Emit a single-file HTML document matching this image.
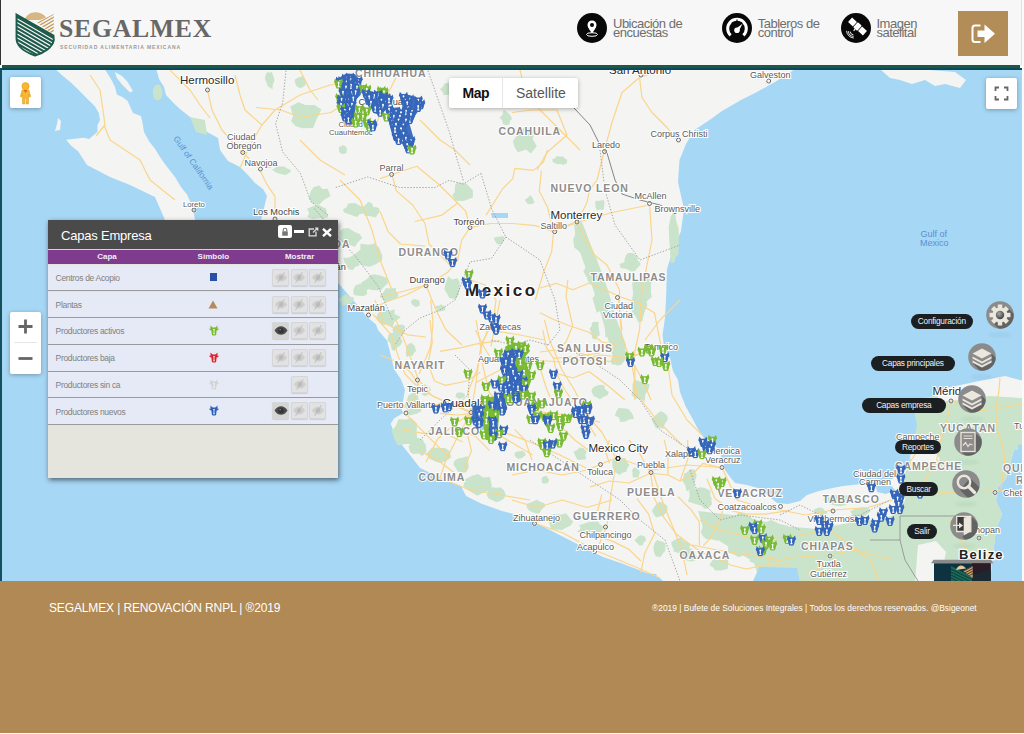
<!DOCTYPE html>
<html><head><meta charset="utf-8">
<style>
html,body{margin:0;padding:0;width:1024px;height:734px;overflow:hidden;background:#fbfbfb;font-family:"Liberation Sans",sans-serif;}
.abs{position:absolute;}
#hdr{position:absolute;left:0;top:0;width:1020px;height:65px;background:#f7f7f7;border-left:1px solid #333;border-right:1px solid #e2e2e2;}
#gline{position:absolute;left:2px;top:65px;width:1018px;height:3px;background:#1f5946;}
#tline{position:absolute;left:0;top:68px;width:1022px;height:2px;background:#0b4a5a;}
#lborder{position:absolute;left:0;top:68px;width:2px;height:513px;background:#134f5e;}
#map{position:absolute;left:2px;top:70px;width:1020px;height:511px;overflow:hidden;}
#footer{position:absolute;left:0;top:581px;width:1024px;height:152px;background:#b08954;}
#footer .l{position:absolute;left:49px;top:20px;color:#fff;font-size:12px;letter-spacing:-0.13px;}
#footer .r{position:absolute;left:652px;top:21.5px;color:#fff;font-size:8.44px;letter-spacing:0px;}
.navt{font-size:13px;letter-spacing:-0.5px;line-height:8.6px;color:#6e6e6e;}
.ctl{background:#fff;border-radius:2px;box-shadow:0 1px 4px rgba(0,0,0,0.3);}
.ph{top:31px;width:60px;text-align:center;font-size:8px;font-weight:bold;color:#f4eef6;line-height:12px;}
.prow{position:absolute;left:0;width:290px;height:25.7px;background:#e6eaf6;border-bottom:1px solid #9a9a9a;}
.pname{position:absolute;left:7.6px;top:8.3px;font-size:8.5px;letter-spacing:-0.32px;color:#808080;line-height:10px}
.eb{position:absolute;top:4px;width:17px;height:17px;background:#e2e2e2;border-radius:2px;box-shadow:inset 0 0 0 1px #d6d6d6, 0 1px 1px rgba(0,0,0,0.12);}
.eb svg{position:absolute;left:-0.5px;top:0}
.prow svg,.prow div svg{display:block}
.eb.on{background:#d5d5d5}
.pill{position:absolute;background:#1b1f22;border-radius:8px;color:#f0f0f0;font-size:8.3px;letter-spacing:-0.25px;text-align:center;}
/*MAPCSS*/text.st{font-family:"Liberation Sans",sans-serif;font-weight:bold;font-size:10.5px;letter-spacing:0.87px;fill:#8c8c8c;stroke:#fff;stroke-width:2px;paint-order:stroke;}
text.c1{font-family:"Liberation Sans",sans-serif;font-size:11.5px;fill:#2a2a2a;stroke:#fff;stroke-width:2px;paint-order:stroke;}
text.c2{font-family:"Liberation Sans",sans-serif;font-size:9.2px;fill:#444;stroke:#fff;stroke-width:2px;paint-order:stroke;}
text.c4{font-family:"Liberation Sans",sans-serif;font-size:7.7px;fill:#5a5a5a;stroke:#fff;stroke-width:2px;paint-order:stroke;}
text.c3{font-family:"Liberation Sans",sans-serif;font-size:9px;fill:#5a5a5a;stroke:#fff;stroke-width:2px;paint-order:stroke;}
text.wl{font-family:"Liberation Sans",sans-serif;font-size:9px;fill:#5b8fd3;}
text.mx{font-family:"Liberation Sans",sans-serif;font-weight:bold;font-size:17px;letter-spacing:2.5px;fill:#222;stroke:#fff;stroke-width:2.5px;paint-order:stroke;}
/*ENDMAPCSS*/</style></head><body>
<div id="hdr">
<svg class="abs" style="left:14px;top:11px" width="40" height="46" viewBox="14 11 40 46">
<defs><clipPath id="sh"><path d="M15.5,14.5 L52.5,35.5 L52.8,40 C52,47 43,53 34,55.5 C24,52 16,47 15.5,39 Z"/></clipPath>
<clipPath id="gt"><path d="M36,22.5 L52.8,14 L52.8,35 Z"/></clipPath></defs>
<path d="M23.5,20 C25,15 30,12.3 34,12.3 C38,12.3 43,14 45,17.5 L39,20 Z" fill="#d6b783"/>
<g clip-path="url(#gt)" stroke="#c49a5c" stroke-width="1.3"><path d="M30,27 L56,12 M30,30.3 L56,15.3 M30,33.6 L56,18.6 M30,36.9 L56,21.9 M30,40.2 L56,25.2 M30,43.5 L56,28.5"/></g>
<g clip-path="url(#sh)"><rect x="14" y="11" width="40" height="46" fill="#1e5b4b"/>
<g stroke="#f7f7f7" stroke-width="1.2"><path d="M16,18.7 L54,40.7 M16,22.5 L54,44.5 M16,26.3 L54,48.3 M16,30.1 L54,52.1 M16,33.9 L54,55.9 M16,37.7 L54,59.7 M16,41.5 L54,63.5 M16,45.3 L54,67.3"/></g>
</g>
<path d="M15.5,14.5 L52.5,35.5 L52.8,40 C52,47 43,53 34,55.5 C24,52 16,47 15.5,39 Z" fill="none" stroke="#1e5b4b" stroke-width="1.9"/>
</svg>
<div class="abs" style="left:58px;top:14px;font-family:'Liberation Serif',serif;font-weight:bold;font-size:25.7px;letter-spacing:0.75px;color:#676767;line-height:30px">SEGALMEX</div>
<div class="abs" style="left:59px;top:43.5px;font-weight:bold;font-size:5px;letter-spacing:0.94px;color:#9a9a9a;line-height:7px">SECURIDAD ALIMENTARIA MEXICANA</div>
<div class="abs nav" style="left:576px;top:13px"><svg width="30" height="30" viewBox="0 0 30 30"><circle cx="15" cy="15" r="15" fill="#080808"/><path d="M15,7.5 C12.2,7.5 10.5,9.6 10.5,12 C10.5,14.6 13,17.5 15,20.5 C17,17.5 19.5,14.6 19.5,12 C19.5,9.6 17.8,7.5 15,7.5 Z" fill="#fff"/><circle cx="15" cy="12" r="2" fill="#080808"/><ellipse cx="15" cy="21.5" rx="5.5" ry="1.8" fill="none" stroke="#fff" stroke-width="1"/></svg></div>
<div class="abs navt" style="left:612px;top:20.3px">Ubicación de<br>encuestas</div>
<div class="abs nav" style="left:721px;top:13px"><svg width="30" height="30" viewBox="0 0 30 30"><circle cx="15" cy="15" r="15" fill="#080808"/><path d="M8.6,22.4 A9.3,9.3 0 1 1 21.4,22.4" fill="none" stroke="#fff" stroke-width="3"/><path d="M10,9.2 l1.2,1.2 M15,6.6 v1.8 M20,9.2 l-1.2,1.2" stroke="#080808" stroke-width="1.1"/><path d="M13.2,16.2 L20.5,10.8 L16.6,18.2 Z" fill="#fff"/><circle cx="15" cy="17.2" r="2.8" fill="#fff"/></svg></div>
<div class="abs navt" style="left:756.7px;top:20.3px">Tableros de<br>control</div>
<div class="abs nav" style="left:839.5px;top:13px"><svg width="30" height="30" viewBox="0 0 30 30"><circle cx="15" cy="15" r="15" fill="#080808"/><g transform="rotate(42 16.5 13.5)"><rect x="6.5" y="10.5" width="6.5" height="6" fill="#fff"/><rect x="20" y="10.5" width="6.5" height="6" fill="#fff"/><rect x="13.8" y="10" width="5.4" height="7" rx="1" fill="#fff"/><path d="M16.5,17 v2.2" stroke="#fff" stroke-width="1.2"/></g><path d="M9.2,18.6 a3.5,3.5 0 0 0 3.2,3.2 M7.4,18.2 a5.6,5.6 0 0 0 5.2,5.2 M5.6,17.8 a7.6,7.6 0 0 0 7.2,7.2" fill="none" stroke="#fff" stroke-width="0.9"/></svg></div>
<div class="abs navt" style="left:875.5px;top:20.3px">Imagen<br>satelital</div>
<div class="abs" style="left:957px;top:11px;width:50px;height:45px;background:#b38d57"><svg width="50" height="45" viewBox="0 0 50 45"><path d="M22.5,14.5 H17 C15.2,14.5 14.5,15.5 14.5,17 V28.5 C14.5,30 15.2,31 17,31 H22.5" fill="none" stroke="#fff" stroke-width="2"/><path d="M19.5,19.5 H26.5 V13.5 L37,22.8 L26.5,32 V26 H19.5 Z" fill="#fff"/></svg></div>
</div>
<div id="gline"></div>
<div id="tline"></div>
<div id="lborder"></div>
<div id="map">
<svg width="1020" height="511" viewBox="2 70 1020 511">
<defs>
<symbol id="cw" viewBox="0 0 10 11"><path d="M1.2,0.2 L2.9,2.2 Q5,2.7 7.1,2.2 L8.8,0.2 L9.3,2.6 L10,3.8 L8.8,5.6 L8,9 L6.9,10.9 H3.1 L2,9 L1.2,5.6 L0,3.8 L0.7,2.6 Z"/><circle cx="5" cy="4.8" r="1" fill="#fff"/><path d="M4.45,4.8 H5.55 V8.4 H6.2 V9.5 H3.8 V8.4 H4.45 Z" fill="#fff"/></symbol>
</defs>
<rect x="0" y="60" width="1030" height="530" fill="#a6d7f5"/>
<path fill="#f4f4f3" d="M157,68 L797,68 L775,82 L755,93 L741,100 L722,111 L711,119 L694.5,130 L686,144 L679.5,160 L678,182 L684,209 L681,231 L673,250 L667,269 L666,300 L665,318 L662.5,335 L664,346 L670,358 L673,371 L678,380 L680,392 L685.5,406 L692.6,419 L698,429 L704,438 L710,440 L719,450 L723,461 L725,470 L730,477 L735,483 L747,485 L758,488 L766,494 L772,499 L777,503 L788,504 L800,501 L807,495 L818,491.3 L835,487.5 L843,486 L863.5,483.7 L884,481 L892,479 L900.5,473.6 L907,465.5 L913,454.5 L917,441 L919,427 L919.5,413.6 L925,406 L932,398 L940,393 L946,388 L963,384.5 L979,381 L995,378 L1005,376 L1024,381 L1024,450 L1014,450 L1006,479 L998,487 L996,501 L1002,514 L996,530 L994,546 L992,563 L990,583 L665,583 L660,578 L644,572 L623.5,564 L603,557 L583,547 L562.5,536.5 L542,526 L522,516 L502,511 L481,503.5 L466,496 L461,486 L441,478 L420,468 L410,455 L400,442.5 L399.6,443 L394,432.7 L390.7,423.8 L394,418.5 L403,413 L401,408 L403,401 L405,390 L401,379.6 L394,369 L390.7,354.8 L387,340.6 L378,330 L376,324.5 L366,316 L360,308 L352,299 L340,285 L300,250 L261,220 L263,212 L265,204 L267,196 L263,189 L255,183 L248,175 L240,167 L228,161 L220,150 L218,138 L207,132 L200,125 L180,109 L174,103.5 L166,95 L164,87 L159,79 L156,68 Z"/>
<path fill="#f4f4f3" d="M54,68 L63,76 L71.4,83 L79.6,91 L87.9,99.4 L94.7,106 L98.8,113 L100,120 L97.4,125.4 L97.4,132 L92,136.4 L89.2,139 L83.8,137.7 L66,139.8 L71.4,146 L78.3,151.4 L83.8,160 L87,165 L110,177 L130,185 L155,197 L165,220 L175,260 L200,300 L230,330 L260,330 L240,290 L195,220 L193,208 L187,194.5 L181,187 L175,177 L165.6,165 L160,157 L155,148.7 L149.4,141.8 L144,132 L142.5,122.7 L141,116 L133,113 L127.5,100.8 L122,96.7 L117,94.7 L115,87 L111,79 L104,68 Z"/>
<path fill="#f4f4f3" d="M115,72 L122,76 L127.5,81.7 L133,91 L130,92.6 L122,84.4 L116.6,77.6 Z"/>
<ellipse cx="157.6" cy="92.6" rx="4.8" ry="8" fill="#c9e4ca"/>
<path fill="#f4f4f3" d="M58,118 L61,121 L60,130 L55,131 L57,124 Z"/>
<path fill="#f4f4f3" d="M881,70 L900,70 L930,70 L955,72 L966,80 L960,88 L945,84 L935,86 L925,80 L912,84 L900,80 L890,78 Z"/>
<path fill="#c9e4ca" d="M190,117 L205,120 L207,135 L196,132 Z"/>
<g fill="#c9e4ca"><path d="M912,400 L935,396 L960,398 L985,392 L1024,392 L1024,450 L1014,450 L1006,479 L998,487 L996,501 L1002,514 L996,530 L994,546 L992,563 L990,583 L870,583 L872,560 L890,540 L898,520 L905,500 L902,482 L908,465 L913,445 L917,425 Z"/><path d="M574,224 L582,222 L592,248 L600,268 L608,290 L616,318 L626,345 L624,362 L614,360 L606,332 L598,304 L590,280 L582,258 L576,240 Z"/><path d="M866,528 L880,520 L902,512 L908,540 L900,583 L862,583 L860,550 Z"/><path d="M698,511 L741,516 L782,526 L818,529 L843,524 L872,520 L880,545 L870,583 L760,583 L754,562 L729,547 L704,531 Z"/><path d="M367.5,209.5 L366.4,213.0 L359.4,214.2 L357.1,217.1 L350.4,214.8 L343.8,212.2 L343.0,209.4 L346.5,207.3 L348.2,203.5 L355.1,203.1 L360.2,206.0 L366.6,207.2 Z"/><path d="M379.6,212.1 L377.7,214.3 L375.8,217.6 L371.7,216.3 L368.4,216.1 L364.0,215.6 L366.0,211.4 L365.3,208.7 L368.3,208.0 L372.4,206.9 L376.7,207.2 L379.2,208.5 Z"/><path d="M362.2,238.1 L357.4,242.8 L355.0,246.7 L349.6,245.0 L346.3,245.6 L341.7,241.3 L340.5,238.0 L339.6,231.7 L343.1,228.6 L348.4,227.9 L355.1,232.2 L359.7,234.0 Z"/><path d="M382.4,255.8 L382.0,260.5 L375.7,264.3 L369.7,266.8 L362.5,265.6 L355.5,260.3 L353.4,255.2 L360.3,249.8 L360.5,243.7 L368.9,244.8 L374.8,243.4 L379.1,247.8 Z"/><path d="M358.2,261.2 L359.6,265.6 L355.7,266.5 L352.7,269.9 L348.4,269.2 L346.3,264.6 L344.3,261.9 L343.3,257.8 L348.4,257.8 L353.0,255.4 L355.0,256.2 L360.2,257.4 Z"/><path d="M387.8,283.4 L383.9,286.8 L381.1,290.3 L375.7,290.3 L371.1,289.8 L364.5,288.3 L360.8,283.1 L367.0,279.1 L370.2,275.2 L374.7,274.2 L380.2,275.4 L387.7,278.3 Z"/><path d="M398.7,294.5 L397.4,297.5 L394.0,299.2 L390.5,300.6 L385.6,302.0 L382.7,299.6 L380.0,295.9 L383.8,291.7 L386.0,287.9 L388.9,288.4 L395.9,287.9 L396.2,291.4 Z"/><path d="M366.7,290.8 L367.2,293.9 L363.2,296.2 L359.1,295.7 L354.8,295.2 L353.4,293.7 L353.4,289.8 L354.2,287.5 L355.6,285.4 L359.4,283.8 L364.8,284.5 L369.6,286.6 Z"/><path d="M400.8,317.1 L394.3,322.0 L392.7,326.9 L387.6,324.5 L382.3,324.7 L378.3,321.7 L376.3,317.2 L377.8,313.6 L383.3,308.2 L389.0,311.1 L394.6,309.3 L394.7,314.3 Z"/><path d="M404.7,329.3 L404.1,332.2 L402.7,335.1 L397.9,335.9 L393.8,334.2 L393.1,332.2 L392.6,329.7 L392.9,328.0 L395.0,325.4 L398.0,324.7 L403.1,324.7 L405.1,326.7 Z"/><path d="M459.9,288.2 L458.6,294.8 L455.7,298.9 L452.0,298.6 L449.3,298.1 L446.6,292.7 L444.4,289.5 L445.5,283.4 L448.1,276.3 L452.1,279.4 L457.5,278.2 L459.8,282.3 Z"/><path d="M472.8,190.3 L472.9,197.6 L468.2,199.3 L463.4,200.9 L455.9,200.8 L452.1,195.5 L454.7,192.1 L455.1,184.9 L457.0,182.7 L464.1,182.8 L466.7,183.9 L470.6,188.0 Z"/><path d="M419.7,302.6 L419.6,305.6 L418.2,306.3 L415.9,307.0 L414.0,305.9 L412.7,305.1 L410.9,302.6 L411.5,300.4 L413.1,299.2 L415.7,299.3 L417.8,300.1 L419.1,300.6 Z"/><path d="M445.2,308.0 L445.5,309.5 L444.3,310.7 L440.3,311.3 L437.2,311.5 L437.9,309.6 L434.5,308.1 L435.7,306.0 L439.2,305.6 L440.9,304.2 L442.7,305.4 L445.2,306.6 Z"/><path d="M326.8,212.1 L328.1,217.2 L323.8,218.5 L318.8,218.0 L312.9,218.9 L307.3,217.0 L309.2,212.8 L307.0,208.9 L312.5,206.2 L317.4,204.5 L322.2,206.8 L326.1,208.7 Z"/><path d="M354.1,299.3 L351.3,302.9 L349.3,303.7 L346.7,304.4 L342.5,305.6 L341.2,302.6 L337.6,299.2 L340.2,298.1 L343.6,295.4 L346.3,294.2 L348.9,296.6 L353.3,297.3 Z"/><path d="M318.2,116.2 L316.6,118.9 L313.1,128.1 L302.5,128.2 L295.7,126.3 L291.1,121.3 L293.0,116.0 L290.3,106.6 L298.4,102.2 L305.3,104.9 L314.5,105.0 L321.5,109.4 Z"/><path d="M305.5,82.0 L305.7,84.9 L302.6,87.3 L300.1,88.2 L296.9,86.6 L295.9,85.1 L294.6,81.2 L295.1,79.4 L297.2,78.1 L300.4,76.8 L303.1,76.2 L304.4,79.5 Z"/><path d="M291.0,170.1 L290.4,172.3 L285.3,175.0 L280.7,174.0 L276.9,172.9 L274.8,171.7 L272.0,169.6 L275.2,168.0 L276.6,165.5 L280.2,166.5 L284.0,166.5 L287.2,168.5 Z"/><path d="M455.1,90.1 L455.0,93.4 L451.0,94.3 L447.8,94.7 L443.2,95.3 L443.3,93.2 L440.0,89.0 L442.4,86.9 L444.7,83.6 L447.0,83.1 L451.5,83.7 L454.3,85.7 Z"/><path d="M512.2,119.0 L510.2,120.3 L509.3,124.5 L506.0,125.3 L502.9,124.0 L502.2,120.3 L499.5,117.7 L502.4,115.0 L503.4,110.0 L505.7,111.1 L508.0,113.1 L510.2,115.0 Z"/><path d="M330.6,196.0 L326.6,198.3 L322.4,201.2 L319.4,204.8 L312.6,203.8 L308.6,198.3 L309.9,194.5 L311.0,190.9 L313.7,187.1 L319.5,185.5 L322.2,188.9 L327.6,188.8 Z"/><path d="M373.5,210.2 L373.5,212.4 L372.5,216.7 L369.6,216.0 L367.3,215.1 L363.4,213.7 L364.1,210.2 L363.9,206.6 L365.9,204.5 L368.4,201.8 L372.2,203.4 L373.0,206.5 Z"/><path d="M346.9,149.4 L346.4,153.1 L344.7,153.7 L343.1,153.9 L340.8,153.6 L339.4,151.9 L338.8,150.6 L339.2,146.4 L341.6,146.2 L342.5,145.1 L345.2,146.2 L346.2,147.0 Z"/><path d="M274.5,80.8 L272.8,84.4 L272.5,89.3 L269.5,87.2 L267.5,86.2 L267.1,84.1 L264.8,78.7 L266.0,73.7 L268.0,71.6 L269.7,73.1 L271.7,71.7 L273.7,76.9 Z"/><path d="M402.5,341.4 L400.3,345.6 L397.4,347.2 L394.5,350.9 L391.9,349.8 L390.2,343.1 L387.4,340.9 L388.5,334.7 L391.4,332.9 L394.8,333.0 L398.7,331.7 L399.3,335.4 Z"/><path d="M416.0,351.0 L414.3,352.6 L412.5,356.1 L410.1,355.2 L406.7,357.2 L405.8,352.5 L406.1,349.4 L406.2,346.8 L408.1,344.4 L410.2,343.1 L412.3,343.4 L414.6,346.1 Z"/><path d="M420.1,404.6 L421.4,411.3 L417.1,413.5 L412.6,414.8 L407.4,415.7 L407.7,410.1 L404.0,405.2 L407.2,399.2 L408.2,395.4 L413.4,392.6 L417.2,393.1 L419.1,401.5 Z"/><path d="M416.6,431.4 L417.2,438.8 L413.4,444.1 L405.5,444.1 L397.8,445.6 L394.5,439.5 L391.6,430.7 L395.8,426.0 L398.5,419.3 L406.2,419.4 L411.4,418.1 L417.0,423.7 Z"/><path d="M425.8,444.8 L426.5,451.8 L422.3,456.0 L418.7,453.6 L413.2,454.1 L410.0,451.7 L408.5,446.6 L411.4,441.8 L413.0,437.8 L418.1,438.1 L422.9,439.6 L423.8,442.2 Z"/><path d="M450.4,454.3 L450.9,457.8 L445.5,461.2 L440.6,463.0 L435.2,461.5 L429.5,458.8 L425.9,454.2 L429.3,450.5 L432.3,447.5 L440.8,447.9 L445.0,448.0 L449.5,451.1 Z"/><path d="M468.8,465.6 L468.3,468.4 L466.1,472.4 L461.6,472.5 L457.5,471.6 L456.4,468.9 L453.5,464.8 L454.1,460.9 L458.5,458.2 L461.7,458.1 L467.6,456.0 L468.1,461.7 Z"/><path d="M431.1,389.8 L428.4,392.3 L427.5,395.4 L425.2,395.9 L422.5,395.1 L421.4,392.8 L419.2,389.3 L419.4,387.7 L422.2,385.7 L424.5,383.9 L427.4,386.1 L429.1,386.8 Z"/><path d="M465.2,394.8 L464.3,397.5 L462.2,398.0 L459.3,399.3 L457.5,397.5 L455.5,397.1 L455.9,395.2 L456.5,393.2 L458.0,392.4 L459.8,392.4 L461.6,392.5 L464.1,393.4 Z"/><path d="M491.8,485.7 L490.0,490.3 L482.7,493.1 L477.4,495.7 L473.6,493.4 L468.6,490.4 L463.5,486.4 L464.2,479.7 L472.2,475.7 L478.0,474.1 L483.2,477.5 L490.0,477.1 Z"/><path d="M505.7,494.8 L504.0,498.5 L500.3,500.9 L496.5,502.2 L491.2,499.8 L488.6,498.5 L486.6,494.9 L488.8,489.6 L492.4,486.9 L495.4,487.8 L500.9,487.5 L504.1,490.4 Z"/><path d="M545.3,506.1 L541.5,509.7 L539.4,513.0 L537.1,513.7 L531.8,511.9 L528.9,510.3 L526.8,507.6 L526.7,503.7 L532.0,502.1 L537.1,499.8 L539.7,501.4 L544.2,503.3 Z"/><path d="M573.3,521.6 L570.6,525.6 L566.1,527.7 L562.0,530.1 L550.8,529.2 L550.3,526.2 L548.9,521.9 L548.2,516.5 L552.7,514.3 L561.9,514.5 L566.0,513.3 L570.9,519.4 Z"/><path d="M604.5,526.8 L600.7,532.2 L593.8,533.5 L590.8,535.0 L586.1,533.4 L576.8,531.9 L580.9,528.2 L579.0,525.4 L586.3,522.8 L589.2,522.0 L598.2,521.5 L599.5,524.2 Z"/><path d="M585.2,454.8 L586.2,459.2 L583.0,459.5 L579.6,460.0 L577.4,459.5 L576.1,457.5 L574.8,454.7 L573.7,451.5 L576.4,450.5 L579.8,447.5 L583.3,448.1 L586.9,451.6 Z"/><path d="M622.3,468.3 L622.0,470.7 L620.6,474.9 L617.8,473.9 L615.6,472.2 L613.9,469.9 L612.6,467.5 L612.2,464.9 L615.3,462.8 L617.7,462.3 L620.1,462.8 L622.1,466.1 Z"/><path d="M640.0,473.1 L638.8,474.9 L638.6,477.5 L636.4,477.2 L633.4,477.7 L632.4,475.4 L632.7,473.0 L632.0,470.9 L633.2,467.9 L636.1,467.6 L638.2,469.3 L639.2,470.4 Z"/><path d="M525.9,455.0 L523.1,457.1 L522.3,457.9 L520.4,458.6 L517.6,458.8 L515.6,456.8 L514.6,455.2 L514.9,452.5 L518.2,451.2 L520.5,451.2 L522.7,450.8 L524.9,452.7 Z"/><path d="M549.2,479.6 L548.4,482.0 L547.7,483.1 L545.3,483.6 L542.9,483.6 L541.9,481.9 L541.6,479.6 L541.8,478.6 L542.6,476.9 L545.7,475.7 L547.2,476.4 L548.0,478.6 Z"/><path d="M585.3,241.0 L585.5,244.6 L581.9,249.3 L579.9,252.5 L577.6,250.1 L574.2,247.6 L573.2,239.5 L575.4,234.0 L577.4,228.4 L580.2,229.3 L583.3,226.7 L586.7,233.7 Z"/><path d="M597.4,270.6 L597.9,275.6 L595.6,281.7 L592.2,283.5 L588.3,282.2 L586.6,276.7 L583.3,271.5 L587.5,264.4 L589.1,259.9 L591.9,260.9 L596.1,256.9 L597.6,262.6 Z"/><path d="M608.4,300.2 L610.8,305.9 L605.0,309.0 L601.1,310.5 L596.7,312.7 L595.3,307.7 L592.5,298.4 L594.8,295.0 L598.6,291.1 L600.8,287.9 L604.9,290.2 L608.2,294.0 Z"/><path d="M619.1,329.2 L618.6,336.0 L614.7,336.6 L611.6,339.1 L608.9,337.5 L605.4,336.9 L604.9,328.8 L605.1,324.5 L608.7,317.8 L612.1,320.2 L616.6,321.0 L617.6,323.7 Z"/><path d="M640.8,264.2 L637.2,268.2 L634.9,271.0 L631.2,271.4 L626.7,269.1 L620.7,267.9 L619.5,264.1 L623.6,262.6 L626.8,259.8 L628.7,258.0 L635.7,258.7 L639.7,262.3 Z"/><path d="M647.3,305.3 L644.0,313.6 L642.3,321.2 L638.0,321.9 L636.4,317.7 L632.0,311.4 L631.8,306.9 L632.2,298.9 L634.2,287.7 L639.2,287.5 L642.4,289.8 L645.6,295.3 Z"/><path d="M678.9,237.2 L678.6,254.3 L676.2,256.6 L673.9,263.0 L670.8,263.3 L669.9,247.8 L669.3,241.2 L668.7,227.3 L670.8,216.4 L674.7,209.4 L676.2,221.1 L678.6,228.8 Z"/><path d="M624.3,360.8 L622.4,363.3 L621.3,364.7 L617.3,365.4 L614.8,364.4 L611.6,364.8 L610.9,360.1 L612.6,356.2 L613.6,352.4 L617.3,353.5 L621.5,352.4 L624.8,356.7 Z"/><path d="M648.8,388.5 L645.3,394.7 L644.5,402.0 L641.2,399.3 L635.0,398.3 L631.4,394.7 L632.5,391.3 L632.5,385.0 L634.1,379.5 L639.7,381.3 L643.1,382.5 L649.7,384.3 Z"/><path d="M667.8,419.5 L664.7,424.0 L663.2,429.0 L660.0,427.6 L656.1,428.5 L653.5,423.5 L651.4,419.6 L654.4,416.5 L657.1,413.7 L660.7,411.3 L663.3,412.3 L667.2,415.7 Z"/><path d="M608.7,391.9 L607.8,395.1 L603.3,397.0 L599.9,399.3 L596.2,396.9 L593.8,396.3 L591.4,391.2 L592.7,387.9 L595.4,386.2 L600.5,384.7 L604.6,385.4 L604.8,389.1 Z"/><path d="M633.1,415.6 L634.0,418.8 L629.0,419.5 L625.6,421.5 L620.2,422.0 L619.0,417.5 L614.9,415.7 L616.3,411.5 L618.5,408.1 L625.8,408.5 L628.8,409.3 L630.9,411.8 Z"/><path d="M532.9,139.6 L536.8,146.0 L531.0,153.6 L525.9,149.5 L517.9,152.2 L514.7,147.4 L512.9,140.9 L517.0,135.3 L521.0,129.5 L525.9,126.4 L531.7,129.1 L533.5,135.6 Z"/><path d="M637.5,260.5 L637.6,263.6 L635.3,265.8 L632.2,267.7 L628.6,264.7 L625.3,263.2 L624.3,260.1 L625.7,255.7 L627.9,252.9 L632.6,253.1 L634.5,254.3 L637.4,256.3 Z"/><path d="M650.9,291.4 L651.7,296.9 L645.9,302.0 L640.6,306.0 L639.1,300.0 L635.6,296.4 L632.9,291.5 L632.2,282.8 L638.3,279.9 L642.2,275.1 L646.7,275.6 L651.2,280.6 Z"/><path d="M598.9,329.5 L599.9,334.9 L597.1,337.0 L595.3,339.7 L592.3,338.2 L591.4,332.9 L589.5,328.6 L591.7,326.1 L592.0,322.8 L594.6,321.8 L598.7,321.9 L598.4,326.2 Z"/><path d="M567.1,159.8 L567.0,163.0 L563.8,164.8 L560.1,164.0 L556.9,164.2 L553.1,162.2 L551.9,159.4 L555.5,157.9 L556.4,155.9 L560.7,156.5 L563.6,156.7 L565.0,158.7 Z"/><path d="M604.3,204.7 L604.1,206.8 L603.3,210.1 L599.5,209.4 L597.3,210.8 L595.4,206.9 L595.6,204.4 L594.9,201.6 L597.1,200.8 L599.6,200.7 L603.8,200.0 L604.5,202.6 Z"/><path d="M504.2,240.0 L503.7,241.2 L501.9,244.0 L499.6,244.3 L497.3,244.2 L495.8,242.3 L494.3,239.5 L494.4,237.2 L498.2,236.7 L499.4,236.8 L502.8,236.3 L504.2,237.3 Z"/><path d="M533.3,199.8 L534.5,202.6 L532.0,204.2 L530.1,204.0 L528.2,204.2 L526.4,202.5 L524.8,199.7 L526.8,198.6 L528.6,197.0 L530.4,195.1 L531.6,196.8 L532.8,198.2 Z"/><path d="M695.6,478.8 L694.4,484.5 L694.8,489.6 L689.6,489.4 L686.5,491.4 L685.3,485.5 L682.4,480.4 L684.3,473.6 L686.5,472.7 L690.3,469.3 L694.2,469.6 L696.7,475.3 Z"/><path d="M711.1,498.9 L712.1,504.2 L707.8,508.2 L704.3,508.8 L701.3,505.6 L698.5,504.1 L695.6,499.3 L698.0,497.0 L699.2,491.0 L704.1,493.0 L708.3,491.5 L708.3,495.9 Z"/><path d="M716.7,529.4 L714.8,533.5 L714.6,536.7 L709.4,539.8 L706.6,536.3 L701.5,533.8 L702.1,530.6 L702.7,526.0 L707.7,524.4 L711.0,522.7 L713.9,522.4 L716.7,524.8 Z"/><path d="M752.8,521.0 L748.0,524.2 L743.8,525.0 L738.3,528.2 L735.0,527.7 L733.3,523.0 L730.4,520.4 L729.1,516.9 L735.9,515.4 L738.9,511.8 L744.2,514.1 L751.1,516.9 Z"/><path d="M788.7,531.3 L783.6,534.5 L778.2,538.8 L769.8,540.0 L763.4,536.2 L755.0,536.3 L753.1,530.9 L754.5,524.6 L763.4,523.0 L771.2,519.9 L779.0,523.7 L788.1,525.9 Z"/><path d="M815.6,543.8 L817.5,551.2 L808.2,554.6 L801.1,560.0 L793.0,558.0 L787.1,549.6 L786.4,546.1 L784.7,538.9 L791.2,532.3 L800.6,533.0 L807.7,531.9 L810.5,539.3 Z"/><path d="M855.9,551.6 L848.6,556.8 L845.8,560.2 L834.4,561.2 L824.6,561.5 L812.7,555.7 L817.9,549.6 L819.6,542.5 L824.5,539.0 L833.2,539.1 L841.4,541.4 L850.2,542.4 Z"/><path d="M885.0,541.5 L879.1,546.4 L875.0,551.8 L869.0,552.8 L862.7,553.8 L861.2,547.9 L859.0,540.4 L862.4,533.4 L864.3,529.2 L868.9,528.8 L876.8,529.5 L880.6,534.9 Z"/><path d="M751.1,548.0 L748.2,553.3 L745.5,554.7 L738.5,557.3 L734.1,554.5 L728.5,552.8 L727.9,549.1 L729.6,541.5 L734.8,542.1 L741.2,539.7 L745.0,539.5 L748.2,543.6 Z"/><path d="M667.5,509.7 L666.1,512.8 L663.1,516.0 L659.9,516.3 L656.2,517.4 L654.0,514.7 L651.9,510.9 L654.2,507.0 L656.2,504.5 L659.7,501.5 L664.8,504.0 L667.3,505.9 Z"/><path d="M690.3,544.0 L689.1,548.5 L684.7,552.9 L679.0,553.3 L673.7,551.4 L673.4,548.4 L671.7,545.7 L671.3,541.9 L675.0,539.7 L680.8,537.2 L682.5,539.9 L685.7,542.1 Z"/><path d="M646.1,540.5 L643.6,542.2 L643.0,545.0 L639.8,545.8 L638.1,544.0 L636.2,542.3 L634.6,540.6 L636.6,537.9 L638.3,536.3 L640.3,535.3 L642.1,535.4 L644.9,536.6 Z"/><path d="M728.3,564.3 L727.6,569.0 L723.7,569.8 L720.6,570.6 L715.0,570.6 L713.5,567.8 L709.4,565.0 L712.1,560.5 L715.6,557.3 L718.7,558.1 L724.5,558.5 L728.1,560.2 Z"/><path d="M790.1,570.0 L790.8,572.8 L787.9,577.1 L780.8,575.2 L771.2,576.7 L767.6,575.0 L767.1,570.9 L768.5,565.2 L773.8,564.1 L779.5,561.3 L788.1,563.5 L789.0,568.0 Z"/><path d="M710.3,495.9 L712.3,499.0 L705.5,501.7 L700.5,505.4 L694.0,503.4 L687.9,501.6 L689.8,495.7 L688.9,489.8 L695.8,489.0 L699.7,487.3 L704.7,487.9 L710.3,490.6 Z"/><path d="M720.8,530.6 L721.8,537.2 L717.4,540.7 L711.5,539.3 L705.8,539.0 L702.7,535.7 L700.5,531.3 L704.7,526.4 L707.1,517.6 L711.2,520.0 L716.9,516.9 L720.9,522.4 Z"/><path d="M764.6,540.1 L758.2,543.5 L755.7,551.9 L748.6,549.7 L743.7,549.7 L736.5,546.3 L735.5,538.3 L741.9,536.4 L741.2,529.4 L750.6,529.6 L757.5,531.7 L762.3,533.8 Z"/><path d="M695.2,554.3 L698.1,558.3 L694.0,560.9 L690.5,561.5 L686.1,560.3 L684.9,558.9 L682.2,554.6 L684.4,551.1 L687.1,547.9 L690.1,548.3 L693.1,550.0 L694.7,552.7 Z"/><path d="M629.7,464.7 L627.4,468.1 L626.3,471.7 L620.0,473.5 L615.4,470.5 L614.6,468.1 L612.4,464.6 L612.1,461.5 L615.9,457.3 L620.5,457.4 L625.5,458.3 L626.3,461.4 Z"/><path d="M665.3,548.2 L665.1,551.0 L662.9,553.6 L660.5,557.3 L655.7,556.3 L653.8,551.5 L653.4,547.1 L654.9,542.5 L657.0,540.0 L660.2,541.3 L662.9,541.7 L665.6,543.8 Z"/><path d="M768.8,560.1 L766.2,562.7 L764.3,564.8 L759.0,567.3 L755.0,565.0 L754.4,563.6 L749.2,561.2 L753.1,555.9 L755.3,552.4 L759.0,553.9 L764.4,552.4 L765.5,556.6 Z"/><path d="M809.7,540.6 L810.2,544.0 L804.0,545.1 L798.8,546.5 L793.5,547.4 L787.2,544.3 L787.5,540.3 L788.4,535.3 L793.9,533.6 L801.6,533.2 L806.9,533.0 L811.8,536.8 Z"/><path d="M840.8,544.3 L839.2,548.4 L835.5,549.8 L829.6,552.4 L826.9,550.0 L822.6,547.1 L821.2,545.1 L821.1,541.4 L825.1,540.0 L830.2,536.3 L836.9,538.9 L839.2,542.4 Z"/><path d="M861.0,520.4 L861.1,523.1 L858.0,525.0 L854.3,526.4 L852.6,523.8 L847.2,522.7 L849.6,520.4 L850.6,517.6 L850.8,514.9 L855.6,515.5 L859.4,514.7 L861.2,517.3 Z"/><path d="M903.9,505.0 L905.2,508.1 L902.4,512.7 L899.9,510.7 L898.4,510.1 L896.5,507.8 L895.2,504.7 L895.2,500.9 L897.7,498.3 L899.9,498.8 L903.0,497.9 L903.3,501.8 Z"/><path d="M851.3,499.8 L850.6,501.6 L846.0,504.7 L840.6,506.3 L833.4,505.3 L825.1,502.6 L823.3,499.8 L825.5,496.3 L833.6,494.8 L840.5,495.9 L845.3,495.2 L853.3,496.8 Z"/><path d="M870.9,511.1 L866.5,514.8 L864.9,515.9 L859.4,516.4 L853.9,516.6 L852.4,514.7 L850.2,511.4 L852.2,510.0 L856.8,508.5 L860.3,507.8 L864.5,507.8 L868.7,508.3 Z"/><path d="M826.8,511.4 L827.3,513.9 L822.4,515.4 L819.0,516.3 L816.6,515.2 L814.9,514.3 L814.1,512.1 L814.1,509.5 L816.0,508.5 L819.1,507.4 L822.6,508.1 L824.5,510.4 Z"/></g>
<g fill="#f4f4f3"><path d="M940,393 L980,383 L1005,378 L1022,382 L1022,398 L990,396 L960,400 L935,402 Z"/><path d="M910,455 L935,448 L940,460 L912,468 Z"/><path d="M918,545 L936,541 L946,552 L944,562 L934,564 L934,583 L915,583 Z"/></g>
<g fill="#a6d7f5"><path d="M478,425.5 L486,426 L485,430 L478,430 Z"/><path d="M491,213 L508,213 L508,218 L492,218 Z"/><path d="M735,470 L748,472 L745,482 L736,480 Z"/><path d="M759.5,567 L797,568 L800,583 L752,583 Z"/><path d="M640,573 L656,574 L660,583 L640,583 Z"/><path d="M876,486 L890,484 L895,490 L886,494 L877,492 Z"/><path d="M1018,445 L1024,444 L1024,456 L1018,456 Z"/></g>
<g fill="none" stroke="#fbd589" stroke-width="1.2" stroke-linejoin="round"><path d="M577,222.5 L594.5,255 L607,265 L619.5,290 L619.5,310 L622,330"/><path d="M577,222.5 L612,212.5 L649.5,205"/><path d="M577,222.5 L554.5,231"/><path d="M649.5,205 L652,240 L647,265 L642,290 L639.5,330 L632,365 L637,395 L657,420 L682,445"/><path d="M577,222.5 L587,202.5 L589.5,190 L597,180 L604.5,150 L612,122.5 L622,92.5 L639.5,77.5 L662,70"/><path d="M639.5,77.5 L642,97.5 L652,112.5 L667,127.5 L677,140"/><path d="M512,112.5 L532,110 L557,110 L567,135 L547,152.5 L537,170"/><path d="M396,77.5 L386,97.5 L376,125"/><path d="M256,107.5 L281,110 L301,117.5 L331,112.5 L350,100"/><path d="M256,165 L271,167.5"/><path d="M426,285 L406,295 L391,300 L373.5,307.5 L366,315"/><path d="M426,285 L436,310 L446,330 L462,345"/><path d="M418.5,380 L431,395 L446,402.5 L471,412.5"/><path d="M471,412.5 L476,382.5 L481,345 L493.5,320 L496,300 L485,285 L470,280"/><path d="M418.5,380 L406,345 L396,320"/><path d="M471,412.5 L456,440 L446,460 L440,478"/><path d="M406,412.5 L416,395 L418.5,380"/><path d="M617,460 L602,432.5 L587,415 L574.5,390 L562,370 L549.5,340 L544.5,320"/><path d="M569.5,362.5 L599.5,355 L627,357.5 L652,350"/><path d="M617,457.5 L652,470 L687,465 L722,467.5"/><path d="M667,357.5 L672,395 L687,420 L702,435"/><path d="M617,457.5 L612,487.5 L607,525 L597,550"/><path d="M652,470 L662,500 L672,525 L682,550 L687,575"/><path d="M512,475 L537,470 L562,475 L587,470 L617,457.5"/><path d="M532,522.5 L562,532.5 L594.5,550 L637,567.5 L660,578"/><path d="M512,500 L537,507.5 L562,500 L587,507.5 L612,500"/><path d="M722,467.5 L737,500 L762,507.5"/><path d="M692,545 L717,550 L749.5,555 L780,560"/><path d="M768,507.5 L805.5,515 L833,510 L868,507.5 L908,495"/><path d="M908,495 L943,492.5 L993,491 L1024,490"/><path d="M768,562.5 L793,557.5 L828,555 L855.5,550 L893,560"/><path d="M893,475 L908,465 L918,450"/><path d="M951,401 L979,410.7 L995.4,409 L1021.5,404"/><path d="M951,401 L946,425 L940,442 L936.5,461 L925,480 L908,495"/><path d="M1000,378 L998.7,392.7 L995.4,409 L997,428.7 L1002,445 L1005,458 L1001,489"/><path d="M476,382.5 L500,370 L530,360 L569.5,362.5"/><path d="M498,430 L530,442 L560,455 L590,470"/><path d="M440,478 L470,490 L500,495 L530,500"/><path d="M490,330 L520,335 L545,340"/><path d="M680,300 L660,320 L645,340"/><path d="M700,520 L720,530 L760,540 L800,535 L830,530"/><path d="M830,530 L850,545 L870,560 L880,581"/><path d="M810,581 L820,565 L841,565"/><path d="M950,520 L960,540 L975,560"/><path d="M207.5,90 L212,110 L222,130 L236,146 L243.75,153.4 L259.4,169 L267,184.7 L275,196.4 L275,220"/><path d="M240,168 L250,145 L262,125 L275,110 L300,95 L330,85 L350,82"/><path d="M90,75 L100,90 L103,110 L105,125 L96,136"/><path d="M104,125 L110,140 L140,160 L150,180 L175,200"/><path d="M170,70 L190,90 L200,105 L210,118"/><path d="M235,75 L240,95 L245,110 L262,125"/><path d="M300,70 L310,90 L318,100"/><path d="M392,174.5 L416.8,166.3 L439.2,184.7 L457.6,203 L465.8,211.3 L470,227.6"/><path d="M392,174.5 L396.3,190.9 L412.7,205 L425,223.5 L429,244 L441.3,256.2 L449.5,264.4"/><path d="M470,227.6 L461.7,240 L457.6,260.3 L447.4,272.6 L427,284.8"/><path d="M470,227.6 L490.3,223.5 L512.8,223.5 L535.3,225.6 L553.6,231.7 L576,221.5"/><path d="M486,215.4 L502.6,188.8 L512.8,178.6 L514.8,168.4 L533.2,170.4 L543.4,162.3 L547.5,150"/><path d="M553.6,231.7 L551.6,252.1 L543.4,272.6 L535.3,300"/><path d="M541.4,170.4 L539.3,190.9 L547.5,207.2 L553.6,231.7"/><path d="M427,284.8 L404.5,291 L380,297"/><path d="M380,211.3 L388.2,231.7 L400.4,244 L425,246"/><path d="M414.7,221.5 L441.3,215.4 L457.6,203"/><path d="M392,174.5 L380,178.6"/><path d="M618.4,296.3 L620,317.6 L621.7,335.6 L625,345.4 L631.5,361.7 L638,371.5 L644.6,384.6 L651,400"/><path d="M618.4,296.3 L638,302.9 L654.4,312.7 L657.6,329 L661,345.4"/><path d="M540,352 L566,348.6 L585.8,355 L608.6,361.7 L628,358.4 L644.6,352"/><path d="M567.8,280 L566,296.3 L572.7,325.8 L566,342 L556.3,352"/><path d="M540,312.7 L553,319.2 L569.4,325.8 L589,332.3 L602,342 L618.4,345.4"/><path d="M540,288 L556.3,283.3 L572.7,289.8 L589,283.3 L605.4,289.8 L618.4,296.3"/><path d="M589,371.5 L608.6,386.2 L625,400"/><path d="M549.8,371.5 L572.7,378 L589,371.5"/><path d="M634.8,365 L634.8,400"/><path d="M476,320 L480,341.8 L482.4,363.6 L489,392 L497.7,402.8"/><path d="M430,320 L432.3,341.8 L428,363.6 L434.5,381 L445.4,385.4 L467.2,381 L480.3,372.3"/><path d="M471.5,413.7 L467.2,433.4 L471.5,450.8 L462.8,472.6"/><path d="M380,355 L401.8,363.6 L410.5,372.3 L419.2,385.4"/><path d="M401.8,407.2 L423.6,407.2 L445.4,402.8 L471.5,411.5"/><path d="M397.4,429 L423.6,433.4 L445.4,433.4 L462.8,442"/><path d="M419.2,450.8 L436.7,459.5 L454,472.6"/><path d="M489,429 L510.8,442 L532.6,455"/><path d="M590,486.9 L609.5,481 L629,483 L650.5,473.2 L668,475 L680,481 L691.6,475 L703,463.4 L722.8,468.3"/><path d="M650.5,473.2 L654.5,498.6 L664.2,518 L676,533.75 L691.6,545.5 L703.3,553.3 L715,557.2 L730.6,565 L746,569 L765.8,565 L790,565"/><path d="M637,498.6 L648.6,514.2 L654.5,533.75 L644.7,553.3 L640.8,572.8"/><path d="M678,496.6 L691.6,510.3 L699.4,522 L699.4,545.5"/><path d="M707,479 L715,498.6 L730.6,510.3 L746,514.2 L765.8,514.2 L790,510.3"/><path d="M722.8,510.3 L719,522 L711,537.7 L703.3,545.5"/><path d="M601.7,494.7 L597.8,510.3 L590,518"/><path d="M590,533.75 L613.4,541.6 L629,549.4 L640.8,561"/><path d="M609.5,463.4 L605.6,451.7 L609.5,440"/><path d="M629,440 L638.8,451.7 L650.5,473.2"/><path d="M664.2,440 L668,455.6 L668,475"/><path d="M687.7,440 L687.7,459.5 L680,481"/><path d="M542.8,330 L546.4,347.7 L553.5,358.4 L557,374.3 L564,388.5 L574.8,404.5 L587,422 L596,436.4"/><path d="M553.5,358.4 L574.8,356.6 L600,353"/><path d="M440,413.3 L457.7,415 L472,413.3"/><path d="M475.5,330 L484.3,347.7 L493.2,362"/><path d="M528.7,404.5 L539.3,411.6 L564,415 L581.8,418.6 L600,422.2"/><path d="M514.5,429.3 L525,440 L532,460"/><path d="M440,351.3 L461.3,347.7 L475.5,344.2 L500,340.6"/><path d="M539.3,365.5 L546.4,388.5 L553.5,404.5"/><path d="M457.7,429.3 L475.5,436.4 L489.6,450.6"/><path d="M564,429.3 L574.8,440 L589,450.6"/><path d="M430.7,300 L433,323 L430.7,346.3 L426,358 L419,374"/><path d="M372.8,314 L391.3,334.8 L398,355.6 L405,374 L419,388 L435,397.3 L453.8,404.3 L471,413"/><path d="M471,413 L467.7,392.7 L477,369.5 L481.6,346.3 L488.6,327.8"/><path d="M407.5,415.8 L419,427.4 L435.3,443.7 L449,457.5"/><path d="M471,413 L453.8,425 L437.6,439 L426,462"/><path d="M375,300 L384,323 L407.5,334.8 L426,337"/><path d="M500,300 L495.6,323 L491,346.3"/><path d="M340,180 L360,200 L372,230 L380,260 L392,290"/><path d="M300,140 L320,160 L345,175"/><path d="M420,120 L440,140 L455,150 L470,165"/><path d="M520,70 L525,90 L540,110 L560,130 L580,150"/></g>
<g fill="none" stroke="#9c9c9c" stroke-width="0.9" stroke-dasharray="1.4,1.6"><path d="M286,70.6 L282.7,102.5 L275.6,123.7 L282.7,152 L300.4,173.3 L311,201.6 L328.7,215.8"/><path d="M335.8,187.5 L367.7,176.9 L378.3,180.4 L399.5,187.5 L435,187.5 L449,180.4 L463.3,184 L481,173.3"/><path d="M428,70.6 L449,130.8 L456,155.6 L463.3,180.4"/><path d="M481,173.3 L491.6,208.7 L505.8,237 L491.6,258.3 L470,262 L455,300 L440,310 L420,318 L405,330 L395,345"/><path d="M314.6,208.7 L332.3,230 L357,258.3 L378.3,286.6 L392.5,320"/><path d="M505.8,237 L540,260 L555,300 L560,330 L548,345"/><path d="M548,345 L530,340 L515,345 L490,340"/><path d="M600,150 L605,190 L615,225 L640,260 L680,245"/><path d="M560,345 L590,360 L620,380 L640,400 L660,430 L690,450"/><path d="M455,355 L470,370 L468,395 L440,420 L420,440"/><path d="M530,440 L560,460 L590,480 L620,500 L640,520 L665,540 L680,581"/><path d="M690,470 L700,500 L720,520 L740,515 L780,520 L800,530"/><path d="M780,515 L800,505 L830,520 L860,515 L890,500"/></g>
<path d="M574,108 L590,125 L600,145 L607,153 L615,180 L622,194 L640,200 L660,205 L674,212" fill="none" stroke="#777" stroke-width="0.9"/>
<path d="M900,540 L900,516 L965,516 M870,540 L900,540 L905,560 L918,581" fill="none" stroke="#8a8a8a" stroke-width="0.8"/>
<g fill="none" stroke="#fff" stroke-width="1.6"><circle cx="207.5" cy="90" r="2"/><circle cx="242.8" cy="152.5" r="2"/><circle cx="260.4" cy="169" r="2"/><circle cx="194" cy="210" r="2"/><circle cx="275" cy="219" r="2"/><circle cx="391.6" cy="174.5" r="2"/><circle cx="470" cy="227.6" r="2"/><circle cx="554.7" cy="231.7" r="2"/><circle cx="577" cy="222" r="2"/><circle cx="604.5" cy="151.5" r="2"/><circle cx="678.5" cy="140" r="2"/><circle cx="649.5" cy="203.5" r="2"/><circle cx="675" cy="211.5" r="2"/><circle cx="641" cy="75" r="2"/><circle cx="768.7" cy="81" r="2"/><circle cx="426" cy="285.8" r="2"/><circle cx="368.5" cy="315" r="2"/><circle cx="496" cy="332.5" r="2"/><circle cx="417.5" cy="380" r="2"/><circle cx="406" cy="413" r="2"/><circle cx="471" cy="412.5" r="2"/><circle cx="617.5" cy="297.5" r="2"/><circle cx="600.5" cy="464.5" r="2"/><circle cx="651" cy="472.5" r="2"/><circle cx="722" cy="467.5" r="2"/><circle cx="780.5" cy="506.5" r="2"/><circle cx="833" cy="511" r="2"/><circle cx="534.5" cy="523.5" r="2"/><circle cx="605.5" cy="527" r="2"/><circle cx="594.5" cy="551.5" r="2"/><circle cx="830" cy="556" r="2"/><circle cx="951" cy="401" r="2"/><circle cx="995" cy="492.5" r="2"/><circle cx="979" cy="538" r="2"/></g>
<g fill="none" stroke="#555" stroke-width="0.9"><circle cx="207.5" cy="90" r="2"/><circle cx="242.8" cy="152.5" r="2"/><circle cx="260.4" cy="169" r="2"/><circle cx="194" cy="210" r="2"/><circle cx="275" cy="219" r="2"/><circle cx="391.6" cy="174.5" r="2"/><circle cx="470" cy="227.6" r="2"/><circle cx="554.7" cy="231.7" r="2"/><circle cx="577" cy="222" r="2"/><circle cx="604.5" cy="151.5" r="2"/><circle cx="678.5" cy="140" r="2"/><circle cx="649.5" cy="203.5" r="2"/><circle cx="675" cy="211.5" r="2"/><circle cx="641" cy="75" r="2"/><circle cx="768.7" cy="81" r="2"/><circle cx="426" cy="285.8" r="2"/><circle cx="368.5" cy="315" r="2"/><circle cx="496" cy="332.5" r="2"/><circle cx="417.5" cy="380" r="2"/><circle cx="406" cy="413" r="2"/><circle cx="471" cy="412.5" r="2"/><circle cx="617.5" cy="297.5" r="2"/><circle cx="600.5" cy="464.5" r="2"/><circle cx="651" cy="472.5" r="2"/><circle cx="722" cy="467.5" r="2"/><circle cx="780.5" cy="506.5" r="2"/><circle cx="833" cy="511" r="2"/><circle cx="534.5" cy="523.5" r="2"/><circle cx="605.5" cy="527" r="2"/><circle cx="594.5" cy="551.5" r="2"/><circle cx="830" cy="556" r="2"/><circle cx="951" cy="401" r="2"/><circle cx="995" cy="492.5" r="2"/><circle cx="979" cy="538" r="2"/></g>
<circle cx="618" cy="458.5" r="3.2" fill="#222" stroke="#fff" stroke-width="1"/><circle cx="618" cy="458.5" r="1.2" fill="#fff"/>
<g><text x="180" y="83.5" class="c1">Hermosillo</text><text x="355" y="76.5" class="st">CHIHUAHUA</text><text x="297" y="248.0" class="st">SINALOA</text><text x="310" y="270.2" class="c2">Culiacán</text><text x="227" y="139.7" class="c3">Ciudad</text><text x="226.5" y="148.7" class="c3">Obregón</text><text x="244.5" y="165.7" class="c3">Navojoa</text><text x="183" y="207.2" class="c4">Loreto</text><text x="253" y="214.7" class="c2">Los Mochis</text><text x="338.5" y="126.7" class="c4">Ciudad</text><text x="329" y="135.2" class="c4">Cuauhtemoc</text><text x="358.5" y="105.2" class="c2">Chihuahua</text><text x="609" y="73.5" class="c1">San Antonio</text><text x="379.5" y="171.2" class="c3">Parral</text><text x="453.5" y="224.7" class="c2">Torreón</text><text x="498.5" y="134.5" class="st">COAHUILA</text><text x="750" y="77.7" class="c3">Galveston</text><text x="650.5" y="137.2" class="c3">Corpus Christi</text><text x="592" y="148.2" class="c3">Laredo</text><text x="550.5" y="192.0" class="st">NUEVO LEON</text><text x="634.5" y="198.7" class="c3">McAllen</text><text x="654.5" y="211.7" class="c3">Brownsville</text><text x="550.5" y="218.5" class="c1">Monterrey</text><text x="540.5" y="228.7" class="c3">Saltillo</text><text x="590.5" y="280.5" class="st">TAMAULIPAS</text><text x="604.5" y="308.7" class="c3">Ciudad</text><text x="603" y="317.7" class="c3">Victoria</text><text x="398.5" y="255.5" class="st">DURANGO</text><text x="409.5" y="282.7" class="c2">Durango</text><text x="347.5" y="311.2" class="c2">Mazatlán</text><text x="479.5" y="329.7" class="c3">Zacatecas</text><text x="394.5" y="368.5" class="st">NAYARIT</text><text x="407" y="391.7" class="c3">Tepic</text><text x="377" y="408.2" class="c3">Puerto Vallarta</text><text x="442.5" y="406.5" class="c1">Guadalajara</text><text x="428.5" y="434.5" class="st">JALISCO</text><text x="478" y="361.7" class="c3">Aguascalientes</text><text x="557" y="352.0" class="st">SAN LUIS</text><text x="562.5" y="364.5" class="st">POTOSI</text><text x="644.5" y="349.7" class="c3">Tampico</text><text x="506" y="405.5" class="st">GUANAJUATO</text><text x="588.5" y="451.5" class="c1">Mexico City</text><text x="587" y="474.7" class="c3">Toluca</text><text x="637" y="468.2" class="c3">Puebla</text><text x="665" y="456.7" class="c3">Xalapa</text><text x="709" y="454.2" class="c3">Heroica</text><text x="705" y="463.2" class="c3">Veracruz</text><text x="506.5" y="470.5" class="st">MICHOACÁN</text><text x="418.5" y="480.5" class="st">COLIMA</text><text x="627" y="495.5" class="st">PUEBLA</text><text x="717.5" y="496.5" class="st">VERACRUZ</text><text x="717.5" y="509.7" class="c3">Coatzacoalcos</text><text x="822.5" y="502.8" class="st">TABASCO</text><text x="807.5" y="521.7" class="c3">Villahermosa</text><text x="853" y="476.7" class="c3">Ciudad del</text><text x="859" y="484.7" class="c3">Carmen</text><text x="801" y="549.5" class="st">CHIAPAS</text><text x="816.5" y="566.7" class="c3">Tuxtla</text><text x="810" y="576.7" class="c3">Gutiérrez</text><text x="573" y="519.5" class="st">GUERRERO</text><text x="513" y="520.7" class="c3">Zihuatanejo</text><text x="579.5" y="537.7" class="c3">Chilpancingo</text><text x="577" y="549.7" class="c3">Acapulco</text><text x="679.5" y="558.5" class="st">OAXACA</text><text x="895" y="470.0" class="st">CAMPECHE</text><text x="896" y="439.7" class="c3">Campeche</text><text x="940" y="432.0" class="st">YUCATAN</text><text x="932.5" y="394.5" class="c1">Mérida</text><text x="1014" y="428.7" class="c3">Tu</text><text x="1003" y="471.5" class="st">QUI</text><text x="1016" y="483.5" class="st">R</text><text x="1003" y="495.7" class="c3">Chetumal</text><text x="975" y="532.7" class="c3">hopan</text><text x="920.5" y="236.7" class="wl">Gulf of</text><text x="920" y="245.7" class="wl">Mexico</text><text x="465" y="295.5" class="mx">Mexico</text><text x="0" y="0" class="wl" style="font-size:8.5px" transform="translate(173,138.5) rotate(55)">Gulf of California</text></g>
<g fill="#7cba38"><path d="M505,347 L512,342 L527,345 L530,351 L525,357 L524,365 L532,373 L531,381 L528,389 L531,396 L522,398 L512,397 Z"/><path d="M484,398 L497,396 L500,405 L497,440 L486,440 L482,420 Z"/></g>
<g fill="#3f70c0"><path d="M502,354 L508,350.6 L513.6,349.8 L521,350.6 L522.6,354.7 L519.3,358.8 L514.4,361.3 L516,366 L517.7,372.7 L522.6,377.6 L527.5,378.4 L529,385.8 L526,390.7 L519.3,392.3 L515.3,390.7 L509.5,389.9 L505.4,385.8 L501.4,380.9 L503,374.3 L500.5,369.4 L503,363.7 L503.8,358.8 Z"/><path d="M472.4,405.4 L484.6,406.3 L483.8,417.7 L483,425.9 L477.3,429.2 L473.2,423.4 L472.4,416 Z"/><path d="M494.4,393.2 L503.4,393.2 L505.9,403 L506.7,409.5 L503.4,415.3 L499.3,413.6 L496,409.5 L489.5,404.6 L493.6,401.4 Z"/><path d="M489.5,419.3 L496.9,420.2 L497.7,430.8 L496,440.6 L491.2,440.6 L488.7,430.8 Z"/><path d="M499.3,426.7 L506.7,427.5 L505,434 L501,434 Z"/><path d="M510.8,394 L522.2,393.2 L520.6,401.4 L515.7,403.8 L511.6,399.7 Z"/><path d="M337.4,79 L346,73.5 L354.5,74 L359.4,79 L361.9,87.6 L360.6,95 L354.5,101 L355.7,107.2 L354.5,117 L352,124.4 L346,124.4 L342.3,114.6 L339.8,104.8 L338.6,97.4 L341,92.5 L337.4,85.2 Z"/><path d="M363,92.5 L371.7,91.3 L379,93.7 L388.8,95 L391.3,101 L387.6,107.2 L382.7,113.3 L379,114.6 L374.1,113.3 L370.4,107.2 L365.5,103.5 Z"/><path d="M387.6,108.4 L398.6,107.2 L404.8,114.6 L409.7,124.4 L414.6,141.5 L412.1,150.1 L406,151.3 L402.3,144 L398.6,142.8 L393.7,139 L391.3,131.7 L388.8,122 Z"/><path d="M401,93.7 L409.7,95 L415.8,97.4 L421.9,99.9 L423.1,104.8 L419.5,109.7 L415.8,114.6 L412.1,123.1 L408.4,124.4 L404.8,117 L402.3,106 Z"/></g>
<g><use href="#cw" x="345.2" y="72.2" width="9.6" height="10.6" fill="#3566b9"/><use href="#cw" x="341.2" y="73.2" width="9.6" height="10.6" fill="#3566b9"/><use href="#cw" x="346.0" y="74.5" width="9.6" height="10.6" fill="#3566b9"/><use href="#cw" x="337.5" y="75.7" width="9.6" height="10.6" fill="#3566b9"/><use href="#cw" x="353.4" y="75.7" width="9.6" height="10.6" fill="#3566b9"/><use href="#cw" x="335.2" y="76.2" width="9.6" height="10.6" fill="#3566b9"/><use href="#cw" x="333.8" y="78.2" width="9.6" height="10.6" fill="#79ba34"/><use href="#cw" x="349.7" y="78.2" width="9.6" height="10.6" fill="#3566b9"/><use href="#cw" x="346.2" y="80.2" width="9.6" height="10.6" fill="#3566b9"/><use href="#cw" x="341.2" y="81.8" width="9.6" height="10.6" fill="#3566b9"/><use href="#cw" x="352.2" y="81.8" width="9.6" height="10.6" fill="#3566b9"/><use href="#cw" x="358.2" y="83.0" width="9.6" height="10.6" fill="#79ba34"/><use href="#cw" x="362.0" y="84.2" width="9.6" height="10.6" fill="#79ba34"/><use href="#cw" x="376.7" y="85.5" width="9.6" height="10.6" fill="#79ba34"/><use href="#cw" x="347.2" y="86.7" width="9.6" height="10.6" fill="#3566b9"/><use href="#cw" x="350.9" y="86.7" width="9.6" height="10.6" fill="#3566b9"/><use href="#cw" x="379.2" y="86.7" width="9.6" height="10.6" fill="#79ba34"/><use href="#cw" x="338.2" y="87.2" width="9.6" height="10.6" fill="#3566b9"/><use href="#cw" x="361.2" y="88.2" width="9.6" height="10.6" fill="#3566b9"/><use href="#cw" x="373.2" y="89.2" width="9.6" height="10.6" fill="#3566b9"/><use href="#cw" x="369.3" y="90.4" width="9.6" height="10.6" fill="#3566b9"/><use href="#cw" x="379.2" y="91.2" width="9.6" height="10.6" fill="#3566b9"/><use href="#cw" x="364.4" y="91.6" width="9.6" height="10.6" fill="#3566b9"/><use href="#cw" x="398.7" y="91.6" width="9.6" height="10.6" fill="#3566b9"/><use href="#cw" x="335.0" y="92.8" width="9.6" height="10.6" fill="#79ba34"/><use href="#cw" x="343.6" y="92.8" width="9.6" height="10.6" fill="#3566b9"/><use href="#cw" x="348.5" y="92.8" width="9.6" height="10.6" fill="#3566b9"/><use href="#cw" x="381.6" y="92.8" width="9.6" height="10.6" fill="#3566b9"/><use href="#cw" x="340.2" y="93.2" width="9.6" height="10.6" fill="#3566b9"/><use href="#cw" x="336.8" y="94.1" width="9.6" height="10.6" fill="#3566b9"/><use href="#cw" x="404.9" y="94.1" width="9.6" height="10.6" fill="#3566b9"/><use href="#cw" x="384.2" y="94.2" width="9.6" height="10.6" fill="#3566b9"/><use href="#cw" x="376.7" y="95.2" width="9.6" height="10.6" fill="#3566b9"/><use href="#cw" x="400.2" y="95.2" width="9.6" height="10.6" fill="#3566b9"/><use href="#cw" x="413.4" y="95.2" width="9.6" height="10.6" fill="#3566b9"/><use href="#cw" x="366.2" y="97.2" width="9.6" height="10.6" fill="#3566b9"/><use href="#cw" x="402.4" y="97.7" width="9.6" height="10.6" fill="#3566b9"/><use href="#cw" x="338.7" y="99.0" width="9.6" height="10.6" fill="#3566b9"/><use href="#cw" x="343.6" y="99.0" width="9.6" height="10.6" fill="#3566b9"/><use href="#cw" x="347.2" y="99.0" width="9.6" height="10.6" fill="#3566b9"/><use href="#cw" x="374.2" y="99.0" width="9.6" height="10.6" fill="#3566b9"/><use href="#cw" x="415.9" y="99.0" width="9.6" height="10.6" fill="#3566b9"/><use href="#cw" x="336.2" y="99.2" width="9.6" height="10.6" fill="#3566b9"/><use href="#cw" x="378.2" y="100.2" width="9.6" height="10.6" fill="#3566b9"/><use href="#cw" x="413.4" y="101.4" width="9.6" height="10.6" fill="#3566b9"/><use href="#cw" x="336.2" y="102.6" width="9.6" height="10.6" fill="#79ba34"/><use href="#cw" x="370.5" y="102.6" width="9.6" height="10.6" fill="#3566b9"/><use href="#cw" x="403.6" y="102.6" width="9.6" height="10.6" fill="#3566b9"/><use href="#cw" x="344.8" y="103.9" width="9.6" height="10.6" fill="#3566b9"/><use href="#cw" x="354.6" y="103.9" width="9.6" height="10.6" fill="#79ba34"/><use href="#cw" x="384.2" y="104.2" width="9.6" height="10.6" fill="#3566b9"/><use href="#cw" x="339.9" y="105.1" width="9.6" height="10.6" fill="#3566b9"/><use href="#cw" x="362.0" y="105.1" width="9.6" height="10.6" fill="#79ba34"/><use href="#cw" x="401.2" y="106.2" width="9.6" height="10.6" fill="#3566b9"/><use href="#cw" x="375.4" y="106.3" width="9.6" height="10.6" fill="#3566b9"/><use href="#cw" x="391.4" y="106.3" width="9.6" height="10.6" fill="#3566b9"/><use href="#cw" x="407.3" y="106.3" width="9.6" height="10.6" fill="#3566b9"/><use href="#cw" x="396.2" y="107.5" width="9.6" height="10.6" fill="#3566b9"/><use href="#cw" x="345.2" y="108.2" width="9.6" height="10.6" fill="#3566b9"/><use href="#cw" x="342.4" y="108.8" width="9.6" height="10.6" fill="#3566b9"/><use href="#cw" x="386.5" y="108.8" width="9.6" height="10.6" fill="#3566b9"/><use href="#cw" x="406.2" y="109.2" width="9.6" height="10.6" fill="#3566b9"/><use href="#cw" x="340.2" y="111.2" width="9.6" height="10.6" fill="#3566b9"/><use href="#cw" x="353.4" y="111.2" width="9.6" height="10.6" fill="#79ba34"/><use href="#cw" x="358.2" y="111.2" width="9.6" height="10.6" fill="#79ba34"/><use href="#cw" x="381.6" y="111.2" width="9.6" height="10.6" fill="#79ba34"/><use href="#cw" x="389.2" y="111.2" width="9.6" height="10.6" fill="#3566b9"/><use href="#cw" x="395.2" y="111.2" width="9.6" height="10.6" fill="#3566b9"/><use href="#cw" x="343.6" y="113.7" width="9.6" height="10.6" fill="#3566b9"/><use href="#cw" x="404.9" y="113.7" width="9.6" height="10.6" fill="#3566b9"/><use href="#cw" x="393.8" y="114.9" width="9.6" height="10.6" fill="#3566b9"/><use href="#cw" x="401.2" y="114.9" width="9.6" height="10.6" fill="#3566b9"/><use href="#cw" x="387.7" y="116.2" width="9.6" height="10.6" fill="#3566b9"/><use href="#cw" x="350.9" y="117.2" width="9.6" height="10.6" fill="#79ba34"/><use href="#cw" x="362.0" y="117.2" width="9.6" height="10.6" fill="#79ba34"/><use href="#cw" x="366.9" y="118.6" width="9.6" height="10.6" fill="#3566b9"/><use href="#cw" x="391.2" y="119.2" width="9.6" height="10.6" fill="#3566b9"/><use href="#cw" x="398.7" y="119.8" width="9.6" height="10.6" fill="#3566b9"/><use href="#cw" x="364.4" y="121.0" width="9.6" height="10.6" fill="#79ba34"/><use href="#cw" x="368.1" y="121.0" width="9.6" height="10.6" fill="#3566b9"/><use href="#cw" x="390.2" y="123.5" width="9.6" height="10.6" fill="#3566b9"/><use href="#cw" x="396.2" y="123.5" width="9.6" height="10.6" fill="#3566b9"/><use href="#cw" x="398.7" y="128.4" width="9.6" height="10.6" fill="#3566b9"/><use href="#cw" x="391.4" y="130.8" width="9.6" height="10.6" fill="#3566b9"/><use href="#cw" x="398.2" y="132.2" width="9.6" height="10.6" fill="#3566b9"/><use href="#cw" x="401.2" y="133.2" width="9.6" height="10.6" fill="#3566b9"/><use href="#cw" x="393.8" y="134.5" width="9.6" height="10.6" fill="#3566b9"/><use href="#cw" x="406.1" y="135.7" width="9.6" height="10.6" fill="#3566b9"/><use href="#cw" x="404.2" y="139.2" width="9.6" height="10.6" fill="#3566b9"/><use href="#cw" x="402.4" y="139.4" width="9.6" height="10.6" fill="#3566b9"/><use href="#cw" x="403.6" y="143.1" width="9.6" height="10.6" fill="#3566b9"/><use href="#cw" x="407.2" y="144.2" width="9.6" height="10.6" fill="#79ba34"/><use href="#cw" x="443.2" y="249.2" width="9.6" height="10.6" fill="#3566b9"/><use href="#cw" x="447.7" y="256.7" width="9.6" height="10.6" fill="#3566b9"/><use href="#cw" x="464.2" y="268.7" width="9.6" height="10.6" fill="#79ba34"/><use href="#cw" x="461.2" y="276.2" width="9.6" height="10.6" fill="#3566b9"/><use href="#cw" x="462.7" y="279.2" width="9.6" height="10.6" fill="#3566b9"/><use href="#cw" x="477.7" y="288.2" width="9.6" height="10.6" fill="#3566b9"/><use href="#cw" x="477.7" y="303.2" width="9.6" height="10.6" fill="#3566b9"/><use href="#cw" x="482.2" y="309.2" width="9.6" height="10.6" fill="#3566b9"/><use href="#cw" x="486.7" y="312.2" width="9.6" height="10.6" fill="#3566b9"/><use href="#cw" x="491.2" y="313.7" width="9.6" height="10.6" fill="#3566b9"/><use href="#cw" x="489.7" y="321.2" width="9.6" height="10.6" fill="#3566b9"/><use href="#cw" x="491.2" y="324.2" width="9.6" height="10.6" fill="#3566b9"/><use href="#cw" x="505.2" y="335.3" width="9.6" height="10.6" fill="#79ba34"/><use href="#cw" x="516.9" y="340.2" width="9.6" height="10.6" fill="#79ba34"/><use href="#cw" x="511.2" y="342.2" width="9.6" height="10.6" fill="#79ba34"/><use href="#cw" x="520.5" y="342.7" width="9.6" height="10.6" fill="#79ba34"/><use href="#cw" x="643.8" y="343.2" width="9.6" height="10.6" fill="#79ba34"/><use href="#cw" x="658.2" y="344.2" width="9.6" height="10.6" fill="#79ba34"/><use href="#cw" x="637.2" y="346.2" width="9.6" height="10.6" fill="#79ba34"/><use href="#cw" x="646.7" y="346.2" width="9.6" height="10.6" fill="#79ba34"/><use href="#cw" x="493.6" y="347.6" width="9.6" height="10.6" fill="#79ba34"/><use href="#cw" x="510.7" y="347.6" width="9.6" height="10.6" fill="#3566b9"/><use href="#cw" x="503.4" y="348.8" width="9.6" height="10.6" fill="#3566b9"/><use href="#cw" x="514.4" y="348.8" width="9.6" height="10.6" fill="#3566b9"/><use href="#cw" x="624.8" y="350.9" width="9.6" height="10.6" fill="#79ba34"/><use href="#cw" x="660.0" y="351.8" width="9.6" height="10.6" fill="#3566b9"/><use href="#cw" x="507.2" y="354.2" width="9.6" height="10.6" fill="#3566b9"/><use href="#cw" x="650.5" y="355.7" width="9.6" height="10.6" fill="#79ba34"/><use href="#cw" x="499.2" y="356.2" width="9.6" height="10.6" fill="#3566b9"/><use href="#cw" x="501.2" y="356.2" width="9.6" height="10.6" fill="#3566b9"/><use href="#cw" x="515.6" y="356.2" width="9.6" height="10.6" fill="#79ba34"/><use href="#cw" x="625.7" y="356.6" width="9.6" height="10.6" fill="#3566b9"/><use href="#cw" x="654.2" y="356.6" width="9.6" height="10.6" fill="#79ba34"/><use href="#cw" x="535.2" y="359.8" width="9.6" height="10.6" fill="#79ba34"/><use href="#cw" x="523.2" y="360.2" width="9.6" height="10.6" fill="#79ba34"/><use href="#cw" x="661.0" y="360.4" width="9.6" height="10.6" fill="#79ba34"/><use href="#cw" x="505.8" y="362.2" width="9.6" height="10.6" fill="#3566b9"/><use href="#cw" x="499.7" y="364.7" width="9.6" height="10.6" fill="#3566b9"/><use href="#cw" x="519.2" y="366.0" width="9.6" height="10.6" fill="#79ba34"/><use href="#cw" x="508.2" y="366.2" width="9.6" height="10.6" fill="#3566b9"/><use href="#cw" x="463.2" y="368.2" width="9.6" height="10.6" fill="#79ba34"/><use href="#cw" x="548.7" y="368.4" width="9.6" height="10.6" fill="#3566b9"/><use href="#cw" x="514.2" y="369.2" width="9.6" height="10.6" fill="#3566b9"/><use href="#cw" x="526.7" y="369.6" width="9.6" height="10.6" fill="#79ba34"/><use href="#cw" x="503.4" y="372.1" width="9.6" height="10.6" fill="#3566b9"/><use href="#cw" x="510.7" y="373.2" width="9.6" height="10.6" fill="#3566b9"/><use href="#cw" x="640.0" y="373.8" width="9.6" height="10.6" fill="#79ba34"/><use href="#cw" x="497.2" y="374.5" width="9.6" height="10.6" fill="#79ba34"/><use href="#cw" x="518.2" y="375.8" width="9.6" height="10.6" fill="#3566b9"/><use href="#cw" x="489.9" y="378.2" width="9.6" height="10.6" fill="#3566b9"/><use href="#cw" x="508.2" y="378.2" width="9.6" height="10.6" fill="#3566b9"/><use href="#cw" x="521.2" y="378.2" width="9.6" height="10.6" fill="#79ba34"/><use href="#cw" x="481.2" y="380.7" width="9.6" height="10.6" fill="#79ba34"/><use href="#cw" x="504.6" y="380.7" width="9.6" height="10.6" fill="#3566b9"/><use href="#cw" x="552.4" y="380.7" width="9.6" height="10.6" fill="#3566b9"/><use href="#cw" x="496.2" y="381.2" width="9.6" height="10.6" fill="#3566b9"/><use href="#cw" x="513.2" y="381.9" width="9.6" height="10.6" fill="#3566b9"/><use href="#cw" x="519.2" y="383.2" width="9.6" height="10.6" fill="#3566b9"/><use href="#cw" x="501.2" y="385.2" width="9.6" height="10.6" fill="#3566b9"/><use href="#cw" x="506.2" y="387.2" width="9.6" height="10.6" fill="#3566b9"/><use href="#cw" x="553.6" y="388.0" width="9.6" height="10.6" fill="#79ba34"/><use href="#cw" x="518.2" y="389.2" width="9.6" height="10.6" fill="#79ba34"/><use href="#cw" x="493.6" y="390.5" width="9.6" height="10.6" fill="#3566b9"/><use href="#cw" x="510.7" y="390.5" width="9.6" height="10.6" fill="#3566b9"/><use href="#cw" x="526.7" y="390.5" width="9.6" height="10.6" fill="#79ba34"/><use href="#cw" x="500.2" y="392.2" width="9.6" height="10.6" fill="#3566b9"/><use href="#cw" x="507.2" y="392.7" width="9.6" height="10.6" fill="#79ba34"/><use href="#cw" x="510.8" y="392.7" width="9.6" height="10.6" fill="#3566b9"/><use href="#cw" x="503.2" y="392.9" width="9.6" height="10.6" fill="#79ba34"/><use href="#cw" x="480.3" y="393.9" width="9.6" height="10.6" fill="#79ba34"/><use href="#cw" x="480.2" y="395.4" width="9.6" height="10.6" fill="#79ba34"/><use href="#cw" x="495.5" y="396.2" width="9.6" height="10.6" fill="#3566b9"/><use href="#cw" x="496.0" y="397.8" width="9.6" height="10.6" fill="#3566b9"/><use href="#cw" x="537.2" y="398.1" width="9.6" height="10.6" fill="#79ba34"/><use href="#cw" x="488.5" y="399.8" width="9.6" height="10.6" fill="#3566b9"/><use href="#cw" x="582.1" y="400.1" width="9.6" height="10.6" fill="#79ba34"/><use href="#cw" x="487.5" y="400.2" width="9.6" height="10.6" fill="#3566b9"/><use href="#cw" x="531.6" y="400.2" width="9.6" height="10.6" fill="#79ba34"/><use href="#cw" x="581.8" y="400.2" width="9.6" height="10.6" fill="#79ba34"/><use href="#cw" x="444.0" y="400.9" width="9.6" height="10.6" fill="#3566b9"/><use href="#cw" x="530.7" y="400.9" width="9.6" height="10.6" fill="#79ba34"/><use href="#cw" x="440.4" y="402.1" width="9.6" height="10.6" fill="#3566b9"/><use href="#cw" x="526.7" y="402.7" width="9.6" height="10.6" fill="#3566b9"/><use href="#cw" x="583.0" y="402.7" width="9.6" height="10.6" fill="#3566b9"/><use href="#cw" x="431.1" y="403.2" width="9.6" height="10.6" fill="#3566b9"/><use href="#cw" x="574.2" y="404.0" width="9.6" height="10.6" fill="#3566b9"/><use href="#cw" x="583.1" y="404.0" width="9.6" height="10.6" fill="#3566b9"/><use href="#cw" x="473.2" y="404.4" width="9.6" height="10.6" fill="#3566b9"/><use href="#cw" x="497.9" y="404.4" width="9.6" height="10.6" fill="#3566b9"/><use href="#cw" x="527.2" y="404.4" width="9.6" height="10.6" fill="#3566b9"/><use href="#cw" x="476.4" y="405.2" width="9.6" height="10.6" fill="#3566b9"/><use href="#cw" x="497.2" y="405.2" width="9.6" height="10.6" fill="#3566b9"/><use href="#cw" x="576.9" y="405.2" width="9.6" height="10.6" fill="#3566b9"/><use href="#cw" x="571.3" y="405.9" width="9.6" height="10.6" fill="#3566b9"/><use href="#cw" x="483.8" y="406.8" width="9.6" height="10.6" fill="#79ba34"/><use href="#cw" x="482.6" y="407.6" width="9.6" height="10.6" fill="#79ba34"/><use href="#cw" x="570.8" y="407.6" width="9.6" height="10.6" fill="#3566b9"/><use href="#cw" x="474.4" y="409.2" width="9.6" height="10.6" fill="#3566b9"/><use href="#cw" x="490.8" y="409.2" width="9.6" height="10.6" fill="#79ba34"/><use href="#cw" x="548.9" y="409.8" width="9.6" height="10.6" fill="#79ba34"/><use href="#cw" x="532.8" y="410.1" width="9.6" height="10.6" fill="#79ba34"/><use href="#cw" x="540.1" y="411.5" width="9.6" height="10.6" fill="#79ba34"/><use href="#cw" x="543.8" y="412.5" width="9.6" height="10.6" fill="#79ba34"/><use href="#cw" x="563.4" y="412.5" width="9.6" height="10.6" fill="#79ba34"/><use href="#cw" x="560.6" y="412.8" width="9.6" height="10.6" fill="#79ba34"/><use href="#cw" x="554.7" y="413.7" width="9.6" height="10.6" fill="#79ba34"/><use href="#cw" x="576.2" y="413.7" width="9.6" height="10.6" fill="#3566b9"/><use href="#cw" x="526.0" y="413.8" width="9.6" height="10.6" fill="#79ba34"/><use href="#cw" x="530.2" y="413.8" width="9.6" height="10.6" fill="#3566b9"/><use href="#cw" x="530.7" y="413.8" width="9.6" height="10.6" fill="#3566b9"/><use href="#cw" x="542.6" y="413.8" width="9.6" height="10.6" fill="#3566b9"/><use href="#cw" x="554.9" y="413.8" width="9.6" height="10.6" fill="#79ba34"/><use href="#cw" x="579.4" y="413.8" width="9.6" height="10.6" fill="#3566b9"/><use href="#cw" x="463.9" y="415.0" width="9.6" height="10.6" fill="#79ba34"/><use href="#cw" x="470.9" y="415.0" width="9.6" height="10.6" fill="#3566b9"/><use href="#cw" x="481.5" y="415.0" width="9.6" height="10.6" fill="#79ba34"/><use href="#cw" x="487.5" y="415.0" width="9.6" height="10.6" fill="#3566b9"/><use href="#cw" x="542.4" y="415.0" width="9.6" height="10.6" fill="#3566b9"/><use href="#cw" x="585.5" y="415.0" width="9.6" height="10.6" fill="#3566b9"/><use href="#cw" x="543.0" y="415.7" width="9.6" height="10.6" fill="#3566b9"/><use href="#cw" x="584.0" y="415.7" width="9.6" height="10.6" fill="#3566b9"/><use href="#cw" x="449.8" y="416.2" width="9.6" height="10.6" fill="#79ba34"/><use href="#cw" x="474.4" y="417.3" width="9.6" height="10.6" fill="#3566b9"/><use href="#cw" x="488.5" y="417.3" width="9.6" height="10.6" fill="#3566b9"/><use href="#cw" x="555.7" y="420.6" width="9.6" height="10.6" fill="#79ba34"/><use href="#cw" x="545.9" y="422.5" width="9.6" height="10.6" fill="#79ba34"/><use href="#cw" x="580.2" y="423.5" width="9.6" height="10.6" fill="#3566b9"/><use href="#cw" x="499.1" y="424.4" width="9.6" height="10.6" fill="#3566b9"/><use href="#cw" x="488.5" y="425.5" width="9.6" height="10.6" fill="#3566b9"/><use href="#cw" x="454.5" y="426.7" width="9.6" height="10.6" fill="#79ba34"/><use href="#cw" x="494.4" y="427.9" width="9.6" height="10.6" fill="#79ba34"/><use href="#cw" x="581.2" y="428.4" width="9.6" height="10.6" fill="#3566b9"/><use href="#cw" x="479.2" y="429.1" width="9.6" height="10.6" fill="#79ba34"/><use href="#cw" x="488.5" y="430.2" width="9.6" height="10.6" fill="#3566b9"/><use href="#cw" x="558.6" y="430.3" width="9.6" height="10.6" fill="#79ba34"/><use href="#cw" x="486.2" y="433.7" width="9.6" height="10.6" fill="#79ba34"/><use href="#cw" x="707.6" y="434.5" width="9.6" height="10.6" fill="#79ba34"/><use href="#cw" x="698.1" y="436.4" width="9.6" height="10.6" fill="#3566b9"/><use href="#cw" x="537.2" y="437.2" width="9.6" height="10.6" fill="#79ba34"/><use href="#cw" x="554.7" y="437.2" width="9.6" height="10.6" fill="#79ba34"/><use href="#cw" x="547.9" y="438.2" width="9.6" height="10.6" fill="#3566b9"/><use href="#cw" x="544.0" y="439.2" width="9.6" height="10.6" fill="#3566b9"/><use href="#cw" x="702.9" y="439.2" width="9.6" height="10.6" fill="#3566b9"/><use href="#cw" x="537.7" y="439.6" width="9.6" height="10.6" fill="#79ba34"/><use href="#cw" x="542.4" y="439.6" width="9.6" height="10.6" fill="#3566b9"/><use href="#cw" x="706.7" y="440.2" width="9.6" height="10.6" fill="#3566b9"/><use href="#cw" x="497.9" y="440.8" width="9.6" height="10.6" fill="#3566b9"/><use href="#cw" x="701.0" y="442.1" width="9.6" height="10.6" fill="#3566b9"/><use href="#cw" x="704.8" y="444.0" width="9.6" height="10.6" fill="#3566b9"/><use href="#cw" x="686.7" y="445.9" width="9.6" height="10.6" fill="#3566b9"/><use href="#cw" x="542.0" y="446.9" width="9.6" height="10.6" fill="#79ba34"/><use href="#cw" x="690.5" y="447.8" width="9.6" height="10.6" fill="#3566b9"/><use href="#cw" x="697.2" y="448.8" width="9.6" height="10.6" fill="#79ba34"/><use href="#cw" x="896.2" y="464.2" width="9.6" height="10.6" fill="#3566b9"/><use href="#cw" x="896.1" y="473.2" width="9.6" height="10.6" fill="#3566b9"/><use href="#cw" x="711.5" y="475.5" width="9.6" height="10.6" fill="#79ba34"/><use href="#cw" x="717.2" y="476.5" width="9.6" height="10.6" fill="#79ba34"/><use href="#cw" x="713.4" y="479.3" width="9.6" height="10.6" fill="#79ba34"/><use href="#cw" x="866.6" y="481.9" width="9.6" height="10.6" fill="#3566b9"/><use href="#cw" x="732.5" y="487.9" width="9.6" height="10.6" fill="#3566b9"/><use href="#cw" x="915.2" y="488.2" width="9.6" height="10.6" fill="#3566b9"/><use href="#cw" x="889.5" y="488.4" width="9.6" height="10.6" fill="#3566b9"/><use href="#cw" x="896.1" y="490.6" width="9.6" height="10.6" fill="#3566b9"/><use href="#cw" x="892.8" y="492.8" width="9.6" height="10.6" fill="#3566b9"/><use href="#cw" x="893.9" y="498.2" width="9.6" height="10.6" fill="#3566b9"/><use href="#cw" x="888.4" y="503.7" width="9.6" height="10.6" fill="#3566b9"/><use href="#cw" x="895.0" y="503.7" width="9.6" height="10.6" fill="#3566b9"/><use href="#cw" x="878.6" y="506.9" width="9.6" height="10.6" fill="#3566b9"/><use href="#cw" x="876.5" y="511.3" width="9.6" height="10.6" fill="#3566b9"/><use href="#cw" x="814.4" y="514.6" width="9.6" height="10.6" fill="#3566b9"/><use href="#cw" x="860.2" y="514.6" width="9.6" height="10.6" fill="#3566b9"/><use href="#cw" x="854.7" y="515.6" width="9.6" height="10.6" fill="#3566b9"/><use href="#cw" x="885.2" y="515.6" width="9.6" height="10.6" fill="#3566b9"/><use href="#cw" x="871.0" y="517.8" width="9.6" height="10.6" fill="#3566b9"/><use href="#cw" x="753.1" y="518.8" width="9.6" height="10.6" fill="#79ba34"/><use href="#cw" x="819.8" y="518.9" width="9.6" height="10.6" fill="#3566b9"/><use href="#cw" x="824.2" y="521.1" width="9.6" height="10.6" fill="#3566b9"/><use href="#cw" x="748.2" y="521.2" width="9.6" height="10.6" fill="#3566b9"/><use href="#cw" x="869.9" y="522.2" width="9.6" height="10.6" fill="#3566b9"/><use href="#cw" x="749.8" y="523.7" width="9.6" height="10.6" fill="#3566b9"/><use href="#cw" x="756.4" y="523.7" width="9.6" height="10.6" fill="#79ba34"/><use href="#cw" x="740.0" y="524.5" width="9.6" height="10.6" fill="#79ba34"/><use href="#cw" x="814.4" y="525.5" width="9.6" height="10.6" fill="#3566b9"/><use href="#cw" x="822.0" y="525.5" width="9.6" height="10.6" fill="#3566b9"/><use href="#cw" x="758.0" y="532.7" width="9.6" height="10.6" fill="#3566b9"/><use href="#cw" x="782.5" y="533.5" width="9.6" height="10.6" fill="#79ba34"/><use href="#cw" x="749.8" y="534.4" width="9.6" height="10.6" fill="#79ba34"/><use href="#cw" x="764.5" y="534.4" width="9.6" height="10.6" fill="#79ba34"/><use href="#cw" x="786.6" y="535.2" width="9.6" height="10.6" fill="#3566b9"/><use href="#cw" x="761.2" y="538.4" width="9.6" height="10.6" fill="#79ba34"/><use href="#cw" x="767.8" y="540.1" width="9.6" height="10.6" fill="#79ba34"/><use href="#cw" x="758.0" y="545.0" width="9.6" height="10.6" fill="#79ba34"/><use href="#cw" x="755.5" y="545.8" width="9.6" height="10.6" fill="#3566b9"/></g>
</svg>
</div>


<!-- panel -->
<div class="abs" id="panel" style="left:48px;top:220px;width:290px;height:258px;background:#e6e5dd;box-shadow:1px 2px 5px rgba(0,0,0,0.55);">
<div class="abs" style="left:0;top:0;width:290px;height:29px;background:#4b4a4a"></div>
<div class="abs" style="left:13px;top:8px;font-size:13px;letter-spacing:-0.2px;color:#fff">Capas Empresa</div>
<div class="abs" style="left:230px;top:4.7px;width:14px;height:13.7px;background:#fff;border-radius:2px"><svg width="14" height="14" viewBox="0 0 14 14"><rect x="4.2" y="6.2" width="5.6" height="4.6" rx="0.6" fill="#777"/><path d="M5.2,6.3 V5 A1.8,1.8 0 0 1 8.8,5 V6.3" fill="none" stroke="#777" stroke-width="1.1"/></svg></div>
<div class="abs" style="left:246.4px;top:10.3px;width:9.6px;height:2.6px;background:#fff"></div>
<svg class="abs" style="left:260px;top:7px" width="11" height="10" viewBox="0 0 11 10"><path d="M6,2 H1.2 V8.8 H8 V4.5" fill="none" stroke="#ddd" stroke-width="1.3"/><path d="M5,5.5 L9.5,1 M7,1 H9.8 V3.8" fill="none" stroke="#ddd" stroke-width="1.1"/></svg>
<svg class="abs" style="left:274px;top:7.5px" width="10" height="9" viewBox="0 0 10 9"><path d="M1,0.8 L9,8.2 M9,0.8 L1,8.2" stroke="#fff" stroke-width="2.4"/></svg>
<div class="abs" style="left:0;top:29px;width:290px;height:1px;background:#d8d0dc"></div>
<div class="abs" style="left:0;top:30px;width:290px;height:14px;background:#7f3b8d"></div>
<div class="abs ph" style="left:29px">Capa</div>
<div class="abs ph" style="left:135.4px">Símbolo</div>
<div class="abs ph" style="left:221.6px">Mostrar</div>
<div class="prow" style="top:44.8px"><div class="pname">Centros de Acopio</div><div style="position:absolute;left:161.5px;top:8.7px;width:7.5px;height:7.5px;background:#2a50a2"></div><div class="eb" style="left:224.0px"><svg width="18" height="17" viewBox="0 0 18 17"><path d="M3,8.5 C5,5.5 7,4.5 9,4.5 C11,4.5 13,5.5 15,8.5 C13,11.5 11,12.5 9,12.5 C7,12.5 5,11.5 3,8.5 Z" fill="#cfcfcf"/><circle cx="9" cy="8.5" r="2.3" fill="#bdbdbd"/><path d="M12.5,3 L5.5,14" stroke="#b5b5b5" stroke-width="0.7"/></svg></div><div class="eb" style="left:242.5px"><svg width="18" height="17" viewBox="0 0 18 17"><path d="M3,8.5 C5,5.5 7,4.5 9,4.5 C11,4.5 13,5.5 15,8.5 C13,11.5 11,12.5 9,12.5 C7,12.5 5,11.5 3,8.5 Z" fill="#cfcfcf"/><circle cx="9" cy="8.5" r="2.3" fill="#bdbdbd"/><path d="M12.5,3 L5.5,14" stroke="#b5b5b5" stroke-width="0.7"/></svg></div><div class="eb" style="left:261.0px"><svg width="18" height="17" viewBox="0 0 18 17"><path d="M3,8.5 C5,5.5 7,4.5 9,4.5 C11,4.5 13,5.5 15,8.5 C13,11.5 11,12.5 9,12.5 C7,12.5 5,11.5 3,8.5 Z" fill="#cfcfcf"/><circle cx="9" cy="8.5" r="2.3" fill="#bdbdbd"/><path d="M12.5,3 L5.5,14" stroke="#b5b5b5" stroke-width="0.7"/></svg></div></div><div class="prow" style="top:71.5px"><div class="pname">Plantas</div><svg style="position:absolute;left:160px;top:8px" width="10" height="9" viewBox="0 0 10 9"><path d="M5,0.5 L9.5,8.5 H0.5 Z" fill="#b48a5e"/></svg><div class="eb" style="left:224.0px"><svg width="18" height="17" viewBox="0 0 18 17"><path d="M3,8.5 C5,5.5 7,4.5 9,4.5 C11,4.5 13,5.5 15,8.5 C13,11.5 11,12.5 9,12.5 C7,12.5 5,11.5 3,8.5 Z" fill="#cfcfcf"/><circle cx="9" cy="8.5" r="2.3" fill="#bdbdbd"/><path d="M12.5,3 L5.5,14" stroke="#b5b5b5" stroke-width="0.7"/></svg></div><div class="eb" style="left:242.5px"><svg width="18" height="17" viewBox="0 0 18 17"><path d="M3,8.5 C5,5.5 7,4.5 9,4.5 C11,4.5 13,5.5 15,8.5 C13,11.5 11,12.5 9,12.5 C7,12.5 5,11.5 3,8.5 Z" fill="#cfcfcf"/><circle cx="9" cy="8.5" r="2.3" fill="#bdbdbd"/><path d="M12.5,3 L5.5,14" stroke="#b5b5b5" stroke-width="0.7"/></svg></div><div class="eb" style="left:261.0px"><svg width="18" height="17" viewBox="0 0 18 17"><path d="M3,8.5 C5,5.5 7,4.5 9,4.5 C11,4.5 13,5.5 15,8.5 C13,11.5 11,12.5 9,12.5 C7,12.5 5,11.5 3,8.5 Z" fill="#cfcfcf"/><circle cx="9" cy="8.5" r="2.3" fill="#bdbdbd"/><path d="M12.5,3 L5.5,14" stroke="#b5b5b5" stroke-width="0.7"/></svg></div></div><div class="prow" style="top:98.2px"><div class="pname">Productores activos</div><div style="position:absolute;left:160.8px;top:7.1px"><svg width="10" height="11" viewBox="0 0 10 11"><path d="M1.6,0.4 L3.2,2.3 Q5,2.9 6.8,2.3 L8.4,0.4 L8.6,2.8 L7.8,3.3 L9.7,3.8 L9.2,5 L7.6,5.6 L7.1,10 Q5,11 2.9,10 L2.4,5.6 L0.8,5 L0.3,3.8 L2.2,3.3 L1.4,2.8 Z" fill="#7ab82e"/><path d="M4.2,3.9 H5.8 V4.8 H5.4 V8.5 H5.9 V9.2 H4.1 V8.5 H4.6 V4.8 H4.2 Z" fill="#fff"/></svg></div><div class="eb on" style="left:224.0px"><svg width="18" height="17" viewBox="0 0 18 17"><path d="M2.5,8.5 C4.5,5.2 6.8,4.2 9,4.2 C11.2,4.2 13.5,5.2 15.5,8.5 C13.5,11.8 11.2,12.8 9,12.8 C6.8,12.8 4.5,11.8 2.5,8.5 Z" fill="#4a4a4a"/><circle cx="9" cy="8.5" r="2.6" fill="#333"/><circle cx="8.2" cy="7.6" r="0.9" fill="#777"/></svg></div><div class="eb" style="left:242.5px"><svg width="18" height="17" viewBox="0 0 18 17"><path d="M3,8.5 C5,5.5 7,4.5 9,4.5 C11,4.5 13,5.5 15,8.5 C13,11.5 11,12.5 9,12.5 C7,12.5 5,11.5 3,8.5 Z" fill="#cfcfcf"/><circle cx="9" cy="8.5" r="2.3" fill="#bdbdbd"/><path d="M12.5,3 L5.5,14" stroke="#b5b5b5" stroke-width="0.7"/></svg></div><div class="eb" style="left:261.0px"><svg width="18" height="17" viewBox="0 0 18 17"><path d="M3,8.5 C5,5.5 7,4.5 9,4.5 C11,4.5 13,5.5 15,8.5 C13,11.5 11,12.5 9,12.5 C7,12.5 5,11.5 3,8.5 Z" fill="#cfcfcf"/><circle cx="9" cy="8.5" r="2.3" fill="#bdbdbd"/><path d="M12.5,3 L5.5,14" stroke="#b5b5b5" stroke-width="0.7"/></svg></div></div><div class="prow" style="top:124.9px"><div class="pname">Productores baja</div><div style="position:absolute;left:160.8px;top:7.1px"><svg width="10" height="11" viewBox="0 0 10 11"><path d="M1.6,0.4 L3.2,2.3 Q5,2.9 6.8,2.3 L8.4,0.4 L8.6,2.8 L7.8,3.3 L9.7,3.8 L9.2,5 L7.6,5.6 L7.1,10 Q5,11 2.9,10 L2.4,5.6 L0.8,5 L0.3,3.8 L2.2,3.3 L1.4,2.8 Z" fill="#e0242c"/><path d="M4.2,3.9 H5.8 V4.8 H5.4 V8.5 H5.9 V9.2 H4.1 V8.5 H4.6 V4.8 H4.2 Z" fill="#fff"/></svg></div><div class="eb" style="left:224.0px"><svg width="18" height="17" viewBox="0 0 18 17"><path d="M3,8.5 C5,5.5 7,4.5 9,4.5 C11,4.5 13,5.5 15,8.5 C13,11.5 11,12.5 9,12.5 C7,12.5 5,11.5 3,8.5 Z" fill="#cfcfcf"/><circle cx="9" cy="8.5" r="2.3" fill="#bdbdbd"/><path d="M12.5,3 L5.5,14" stroke="#b5b5b5" stroke-width="0.7"/></svg></div><div class="eb" style="left:242.5px"><svg width="18" height="17" viewBox="0 0 18 17"><path d="M3,8.5 C5,5.5 7,4.5 9,4.5 C11,4.5 13,5.5 15,8.5 C13,11.5 11,12.5 9,12.5 C7,12.5 5,11.5 3,8.5 Z" fill="#cfcfcf"/><circle cx="9" cy="8.5" r="2.3" fill="#bdbdbd"/><path d="M12.5,3 L5.5,14" stroke="#b5b5b5" stroke-width="0.7"/></svg></div><div class="eb" style="left:261.0px"><svg width="18" height="17" viewBox="0 0 18 17"><path d="M3,8.5 C5,5.5 7,4.5 9,4.5 C11,4.5 13,5.5 15,8.5 C13,11.5 11,12.5 9,12.5 C7,12.5 5,11.5 3,8.5 Z" fill="#cfcfcf"/><circle cx="9" cy="8.5" r="2.3" fill="#bdbdbd"/><path d="M12.5,3 L5.5,14" stroke="#b5b5b5" stroke-width="0.7"/></svg></div></div><div class="prow" style="top:151.6px"><div class="pname">Productores sin ca</div><div style="position:absolute;left:160.8px;top:7.1px"><svg width="10" height="11" viewBox="0 0 10 11"><path d="M1.6,0.4 L3.2,2.3 Q5,2.9 6.8,2.3 L8.4,0.4 L8.6,2.8 L7.8,3.3 L9.7,3.8 L9.2,5 L7.6,5.6 L7.1,10 Q5,11 2.9,10 L2.4,5.6 L0.8,5 L0.3,3.8 L2.2,3.3 L1.4,2.8 Z" fill="#d2d2d2"/><path d="M4.2,3.9 H5.8 V4.8 H5.4 V8.5 H5.9 V9.2 H4.1 V8.5 H4.6 V4.8 H4.2 Z" fill="#fff"/></svg></div><div class="eb" style="left:243px"><svg width="18" height="17" viewBox="0 0 18 17"><path d="M3,8.5 C5,5.5 7,4.5 9,4.5 C11,4.5 13,5.5 15,8.5 C13,11.5 11,12.5 9,12.5 C7,12.5 5,11.5 3,8.5 Z" fill="#cfcfcf"/><circle cx="9" cy="8.5" r="2.3" fill="#bdbdbd"/><path d="M12.5,3 L5.5,14" stroke="#b5b5b5" stroke-width="0.7"/></svg></div></div><div class="prow" style="top:178.3px"><div class="pname">Productores nuevos</div><div style="position:absolute;left:160.8px;top:7.1px"><svg width="10" height="11" viewBox="0 0 10 11"><path d="M1.6,0.4 L3.2,2.3 Q5,2.9 6.8,2.3 L8.4,0.4 L8.6,2.8 L7.8,3.3 L9.7,3.8 L9.2,5 L7.6,5.6 L7.1,10 Q5,11 2.9,10 L2.4,5.6 L0.8,5 L0.3,3.8 L2.2,3.3 L1.4,2.8 Z" fill="#2d5fb8"/><path d="M4.2,3.9 H5.8 V4.8 H5.4 V8.5 H5.9 V9.2 H4.1 V8.5 H4.6 V4.8 H4.2 Z" fill="#fff"/></svg></div><div class="eb on" style="left:224.0px"><svg width="18" height="17" viewBox="0 0 18 17"><path d="M2.5,8.5 C4.5,5.2 6.8,4.2 9,4.2 C11.2,4.2 13.5,5.2 15.5,8.5 C13.5,11.8 11.2,12.8 9,12.8 C6.8,12.8 4.5,11.8 2.5,8.5 Z" fill="#4a4a4a"/><circle cx="9" cy="8.5" r="2.6" fill="#333"/><circle cx="8.2" cy="7.6" r="0.9" fill="#777"/></svg></div><div class="eb" style="left:242.5px"><svg width="18" height="17" viewBox="0 0 18 17"><path d="M3,8.5 C5,5.5 7,4.5 9,4.5 C11,4.5 13,5.5 15,8.5 C13,11.5 11,12.5 9,12.5 C7,12.5 5,11.5 3,8.5 Z" fill="#cfcfcf"/><circle cx="9" cy="8.5" r="2.3" fill="#bdbdbd"/><path d="M12.5,3 L5.5,14" stroke="#b5b5b5" stroke-width="0.7"/></svg></div><div class="eb" style="left:261.0px"><svg width="18" height="17" viewBox="0 0 18 17"><path d="M3,8.5 C5,5.5 7,4.5 9,4.5 C11,4.5 13,5.5 15,8.5 C13,11.5 11,12.5 9,12.5 C7,12.5 5,11.5 3,8.5 Z" fill="#cfcfcf"/><circle cx="9" cy="8.5" r="2.3" fill="#bdbdbd"/><path d="M12.5,3 L5.5,14" stroke="#b5b5b5" stroke-width="0.7"/></svg></div></div>
</div>
<!-- building -->
<svg class="abs" style="left:930px;top:548px" width="76" height="33" viewBox="930 548 76 33">
<text x="959" y="559" style="font-family:'Liberation Sans',sans-serif;font-weight:bold;font-size:13px;letter-spacing:1.2px;fill:#222;stroke:#fff;stroke-width:2.5px;paint-order:stroke">Belize</text>
<path d="M933.5,559.8 H991 L993.4,563.3 H931 Z" fill="#8a8a8a"/>
<rect x="934" y="563.3" width="56.7" height="17.7" fill="#0d3340"/>
<rect x="972" y="563.3" width="18.7" height="17.7" fill="#2c1c27"/>
<path d="M972,575 L990.7,570 V581 H972 Z" fill="#1a2a33"/>
<defs><clipPath id="bclip"><path d="M951,566 L972,577 V581 H951 Z"/></clipPath><clipPath id="bclip2"><path d="M963,571 L972.7,566 V578 Z"/></clipPath></defs>
<g clip-path="url(#bclip)"><rect x="951" y="563" width="22" height="18" fill="#1b6a55"/><path d="M951,569 L973,580 M951,572 L973,583 M951,575 L973,586 M951,578 L973,589" stroke="#0d3340" stroke-width="0.9"/></g>
<path d="M956,570 C957,567 959,565.5 961,565.5 C963,565.5 965,567 966,568.5 Z" fill="#e2c89a"/>
<g clip-path="url(#bclip2)"><rect x="962" y="565" width="11" height="14" fill="#caa46a"/><path d="M962,572 L973,566 M962,574.5 L973,568.5 M962,577 L973,571 M962,579.5 L973,573.5" stroke="#2c1c27" stroke-width="0.8"/></g>
</svg>
<!-- right buttons --><svg width="0" height="0" style="position:absolute"><defs><filter id="bl" x="-50%" y="-100%" width="200%" height="300%"><feGaussianBlur stdDeviation="1.2"/></filter><radialGradient id="gh" cx="0.4" cy="0.35" r="0.7"><stop offset="0" stop-color="#aaa"/><stop offset="1" stop-color="#3a3a3a"/></radialGradient></defs></svg><div class="pill" style="left:910.6px;top:314px;width:62.4px;height:15.0px;line-height:15.0px">Configuración</div><div class="pill" style="left:870.9px;top:356px;width:84.0px;height:15.0px;line-height:15.0px">Capas principales</div><div class="pill" style="left:862px;top:398px;width:83.6px;height:15.0px;line-height:15.0px">Capas empresa</div><div class="pill" style="left:894.5px;top:440.4px;width:46.5px;height:14.1px;line-height:14.1px">Reportes</div><div class="pill" style="left:899px;top:482.3px;width:39.4px;height:14.2px;line-height:14.2px">Buscar</div><div class="pill" style="left:907px;top:524px;width:30.0px;height:14.6px;line-height:14.6px">Salir</div><svg class="abs" style="left:983px;top:298px" width="34" height="44" viewBox="-17 -17 34 44"><ellipse cx="0" cy="20" rx="11" ry="2.5" fill="rgba(40,60,80,0.05)" filter="url(#bl)"/><defs><clipPath id="c1000315"><circle cx="0" cy="0" r="13.8"/></clipPath></defs><circle cx="0" cy="0" r="13.8" fill="#8b8b8b"/><g clip-path="url(#c1000315)"><path d="M6,-9 L20,5 L20,20 L5,20 L-9,6 Z" fill="#555" opacity="0.75"/></g><g><rect x="-2.2" y="-10.5" width="4.4" height="5" fill="#ebe7dc" transform="rotate(0)"/><rect x="-2.2" y="-10.5" width="4.4" height="5" fill="#ebe7dc" transform="rotate(45)"/><rect x="-2.2" y="-10.5" width="4.4" height="5" fill="#ebe7dc" transform="rotate(90)"/><rect x="-2.2" y="-10.5" width="4.4" height="5" fill="#ebe7dc" transform="rotate(135)"/><rect x="-2.2" y="-10.5" width="4.4" height="5" fill="#ebe7dc" transform="rotate(180)"/><rect x="-2.2" y="-10.5" width="4.4" height="5" fill="#ebe7dc" transform="rotate(225)"/><rect x="-2.2" y="-10.5" width="4.4" height="5" fill="#ebe7dc" transform="rotate(270)"/><rect x="-2.2" y="-10.5" width="4.4" height="5" fill="#ebe7dc" transform="rotate(315)"/><circle cx="0" cy="0" r="7.6" fill="#ebe7dc"/><circle cx="0" cy="0" r="4.2" fill="url(#gh)"/></g></svg><svg class="abs" style="left:965px;top:340px" width="34" height="44" viewBox="-17 -17 34 44"><ellipse cx="0" cy="20" rx="11" ry="2.5" fill="rgba(40,60,80,0.05)" filter="url(#bl)"/><defs><clipPath id="c982357"><circle cx="0" cy="0" r="13.8"/></clipPath></defs><circle cx="0" cy="0" r="13.8" fill="#8b8b8b"/><g clip-path="url(#c982357)"><path d="M9.5,-3.5 L22,9 L22,22 L5,22 L-9.5,5.5 L0,10.5 L9.5,5.5 Z" fill="#555" opacity="0.75"/></g><path d="M0,-8.5 L9.5,-3.5 L0,1.5 L-9.5,-3.5 Z" fill="#ebe7dc"/><path d="M-9.5,-0.5 L0,4.5 L9.5,-0.5 L9.5,1.5 L0,6.5 L-9.5,1.5 Z" fill="#ebe7dc"/><path d="M-9.5,3.5 L0,8.5 L9.5,3.5 L9.5,5.5 L0,10.5 L-9.5,5.5 Z" fill="#ebe7dc"/></svg><svg class="abs" style="left:955px;top:382px" width="34" height="44" viewBox="-17 -17 34 44"><ellipse cx="0" cy="20" rx="11" ry="2.5" fill="rgba(40,60,80,0.05)" filter="url(#bl)"/><defs><clipPath id="c972399"><circle cx="0" cy="0" r="13.8"/></clipPath></defs><circle cx="0" cy="0" r="13.8" fill="#8b8b8b"/><g clip-path="url(#c972399)"><path d="M9.5,-3.5 L22,9 L22,22 L5,22 L-9.5,5.5 L0,10.5 L9.5,5.5 Z" fill="#555" opacity="0.75"/></g><path d="M0,-8.5 L9.5,-3.5 L0,1.5 L-9.5,-3.5 Z" fill="#ebe7dc"/><path d="M-9.5,-0.5 L0,4.5 L9.5,-0.5 L9.5,1.5 L0,6.5 L-9.5,1.5 Z" fill="#ebe7dc"/><path d="M-9.5,3.5 L0,8.5 L9.5,3.5 L9.5,5.5 L0,10.5 L-9.5,5.5 Z" fill="#ebe7dc"/></svg><svg class="abs" style="left:951px;top:424.7px" width="34" height="44" viewBox="-17 -17 34 44"><ellipse cx="0" cy="20" rx="11" ry="2.5" fill="rgba(40,60,80,0.05)" filter="url(#bl)"/><defs><clipPath id="c968441.7"><circle cx="0" cy="0" r="13.8"/></clipPath></defs><circle cx="0" cy="0" r="13.8" fill="#8b8b8b"/><g clip-path="url(#c968441.7)"><path d="M7,-9.5 L22,5 L22,22 L6,22 L-7,9.5 L7,9.5 Z" fill="#555" opacity="0.75"/></g><rect x="-7" y="-9.5" width="14" height="19" fill="none" stroke="#e6e2d6" stroke-width="1.4"/><path d="M-4.5,-6 H4.5 M-4.5,-3.5 H4.5" stroke="#e6e2d6" stroke-width="1.2"/><path d="M-5,3.5 L-2.5,0.5 L0,4.5 L2,2 L4.5,3" fill="none" stroke="#e6e2d6" stroke-width="1.2"/></svg><svg class="abs" style="left:948.6px;top:466.5px" width="34" height="44" viewBox="-17 -17 34 44"><ellipse cx="0" cy="20" rx="11" ry="2.5" fill="rgba(40,60,80,0.05)" filter="url(#bl)"/><defs><clipPath id="c965.6483.5"><circle cx="0" cy="0" r="13.8"/></clipPath></defs><circle cx="0" cy="0" r="13.8" fill="#8b8b8b"/><g clip-path="url(#c965.6483.5)"><path d="M4,-6 L22,12 L22,22 L10,22 L-6,6 Z" fill="#555" opacity="0.75"/></g><circle cx="-2" cy="-2" r="6.2" fill="none" stroke="#ebe7dc" stroke-width="2.4"/><path d="M2.5,2.5 L8.5,8.5" stroke="#ebe7dc" stroke-width="3.2" stroke-linecap="round"/></svg><svg class="abs" style="left:947px;top:508.5px" width="34" height="44" viewBox="-17 -17 34 44"><ellipse cx="0" cy="20" rx="11" ry="2.5" fill="rgba(40,60,80,0.05)" filter="url(#bl)"/><defs><clipPath id="c964525.5"><circle cx="0" cy="0" r="13.8"/></clipPath></defs><circle cx="0" cy="0" r="13.8" fill="#8b8b8b"/><g clip-path="url(#c964525.5)"><path d="M7.5,-9.5 L22,5 L22,22 L8,22 L-1.5,11 Z" fill="#555" opacity="0.75"/></g><path d="M-7.3,-9.7 H6.8 V5.5 H-7.3 Z" fill="#3a3a3a" stroke="#ebe7dc" stroke-width="1.3"/><path d="M-0.3,-8.6 L6.8,-9.7 V5.5 L-0.3,9.6 Z" fill="#ebe7dc"/><path d="M-11,-1.3 H-5 V-3.6 L-1,-0.6 L-5,2.4 V0.1 H-11 Z" fill="#ebe7dc"/></svg>
<!-- map controls -->
<div class="abs ctl" style="left:10px;top:77px;width:31px;height:31px;"><svg width="31" height="31" viewBox="0 0 31 31"><circle cx="15.5" cy="9.2" r="3.6" fill="#f5b82e" stroke="#e49b1f" stroke-width="0.6"/><path d="M12.2,13 H18.8 L20.6,19.5 L19.4,20 L18.6,17.5 L18.4,27 H16.2 V21 H14.8 V27 H12.6 L12.4,17.5 L11.6,20 L10.4,19.5 Z" fill="#f5b82e" stroke="#e49b1f" stroke-width="0.6"/><path d="M13.5,13 L15.5,16 L17.5,13 Z" fill="#e0682a"/></svg></div>
<div class="abs ctl" style="left:449px;top:78px;width:129px;height:30px;"><div class="abs" style="left:13.5px;top:6.5px;font-size:14px;font-weight:bold;letter-spacing:-0.5px;color:#111">Map</div><div class="abs" style="left:53px;top:0;width:1px;height:30px;background:#e6e6e6"></div><div class="abs" style="left:67px;top:6.5px;font-size:14px;color:#565656">Satellite</div></div>
<div class="abs ctl" style="left:986px;top:78px;width:31px;height:31px;"><svg width="31" height="31" viewBox="0 0 31 31"><path d="M9.5,13 V9.5 H13 M18,9.5 H21.5 V13 M21.5,18 V21.5 H18 M13,21.5 H9.5 V18" fill="none" stroke="#666" stroke-width="1.8"/></svg></div>
<div class="abs ctl" style="left:10px;top:312px;width:31px;height:62px;"><div class="abs" style="left:4px;top:30px;width:23px;height:1px;background:#e6e6e6"></div><svg class="abs" style="left:0;top:0" width="31" height="62" viewBox="0 0 31 62"><path d="M8.5,14.5 H22.5 M15.5,7.5 V21.5" stroke="#666" stroke-width="2.8"/><path d="M8.5,46.5 H22.5" stroke="#666" stroke-width="2.8"/></svg></div>
<div id="footer"><div class="l">SEGALMEX | RENOVACIÓN RNPL | ®2019</div><div class="r">®2019 | Bufete de Soluciones Integrales | Todos los derechos reservados. @Bsigeonet</div></div>
</body></html>
